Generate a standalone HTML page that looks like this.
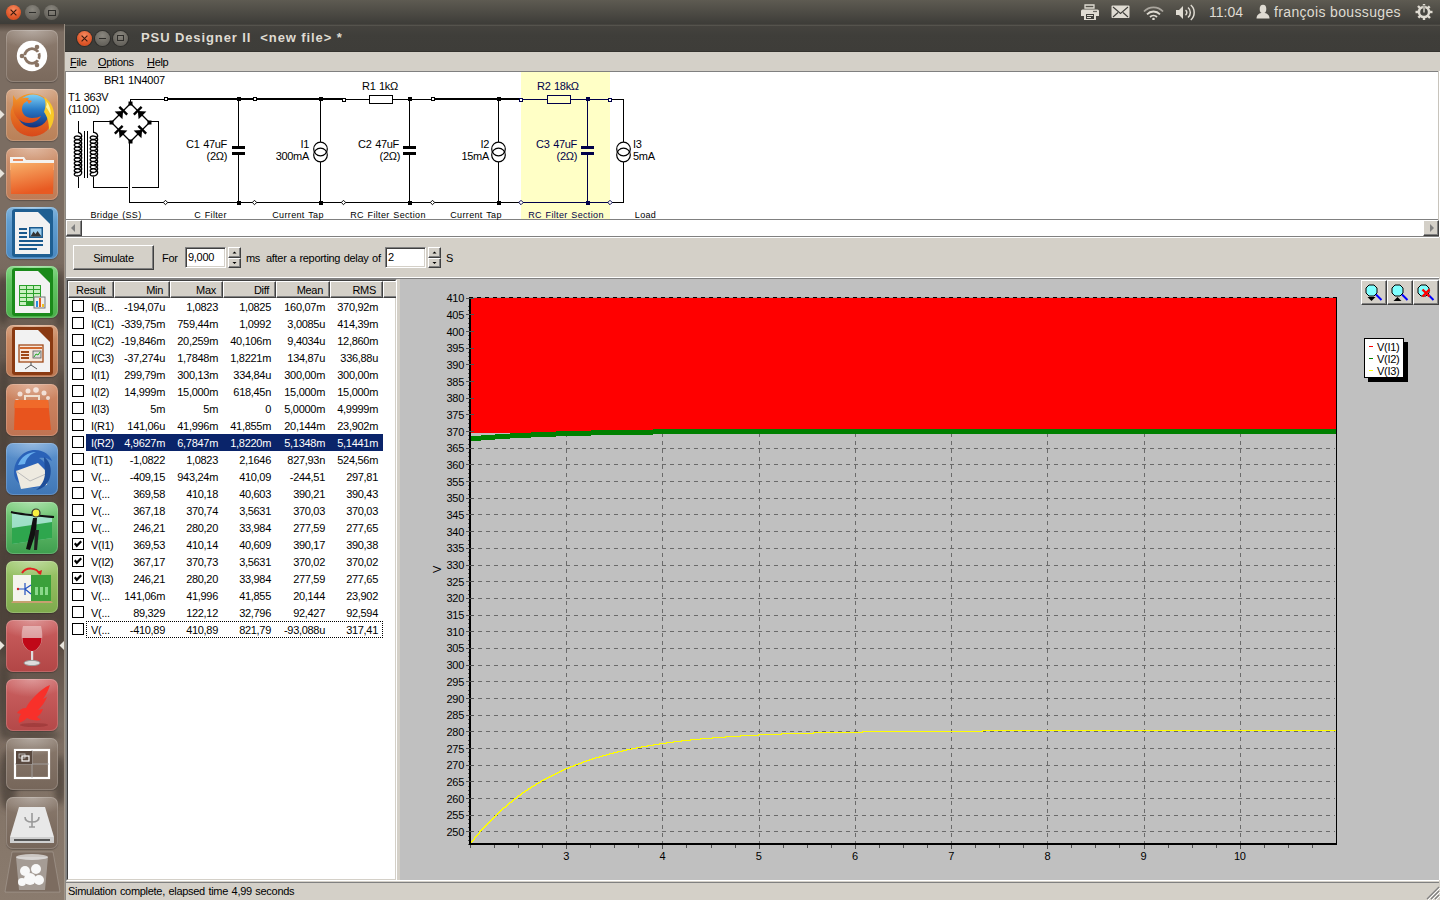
<!DOCTYPE html><html><head><meta charset="utf-8"><style>
*{margin:0;padding:0;box-sizing:border-box}
html,body{width:1440px;height:900px;overflow:hidden;background:#7a6d62;font-family:"Liberation Sans",sans-serif}
.a{position:absolute}
.t{position:absolute;white-space:pre;font-family:"Liberation Sans",sans-serif;font-size:11px;line-height:13px;color:#000;letter-spacing:-0.3px;word-spacing:0.8px}
</style></head><body>
<div class="a" style="left:0;top:0;width:1440px;height:24px;background:linear-gradient(#5e5b52,#3d3c38)"></div>
<!-- top panel buttons -->
<div class="a" style="left:6px;top:5px;width:15px;height:15px;border-radius:50%;background:radial-gradient(circle at 50% 30%,#f68a5f,#e0582a 60%,#c9441b)"></div>
<svg class="a" style="left:6px;top:5px" width="15" height="15"><path d="M4.6 4.6L10.4 10.4M10.4 4.6L4.6 10.4" stroke="#3a1a0e" stroke-width="1.1"/></svg>
<div class="a" style="left:24.5px;top:5px;width:15px;height:15px;border-radius:50%;background:radial-gradient(circle at 50% 30%,#8a877f,#6c6962 60%,#5b5953)"></div>
<div class="a" style="left:28.5px;top:12px;width:7px;height:1.2px;background:#2e2d2a"></div>
<div class="a" style="left:43.5px;top:5px;width:15px;height:15px;border-radius:50%;background:radial-gradient(circle at 50% 30%,#8a877f,#6c6962 60%,#5b5953)"></div>
<div class="a" style="left:47.5px;top:9.5px;width:8px;height:6px;border:1.2px solid #2e2d2a"></div>
<!-- indicators -->
<svg class="a" style="left:1080px;top:4px" width="20" height="17" viewBox="0 0 20 17">
 <path d="M5 1h9v3H5z" fill="none" stroke="#dfdbd2" stroke-width="1.3"/>
 <path d="M2.5 5.5h15a1.5 1.5 0 0 1 1.5 1.5v5h-3v4H4v-4H1V7a1.5 1.5 0 0 1 1.5-1.5z" fill="#dfdbd2"/>
 <path d="M6 10h8v5H6z" fill="#3f3e3a"/><path d="M7 11.5h6M7 13.5h4" stroke="#dfdbd2" stroke-width="1"/>
 <circle cx="14" cy="7.5" r="0.8" fill="#3f3e3a"/><circle cx="16" cy="7.5" r="0.8" fill="#3f3e3a"/>
</svg>
<svg class="a" style="left:1111px;top:5px" width="20" height="14" viewBox="0 0 20 14">
 <rect x="0.5" y="0.5" width="18" height="12.5" rx="1" fill="#dfdbd2"/>
 <path d="M2 2l7.5 6.5L17 2M2 12l5-4.5M17 12l-5-4.5" stroke="#3f3e3a" stroke-width="1.1" fill="none"/>
</svg>
<svg class="a" style="left:1143px;top:6px" width="21" height="14" viewBox="0 0 21 14">
 <path d="M1 5.5a13 13 0 0 1 19 0" stroke="#aaa69e" stroke-width="1.8" fill="none"/>
 <path d="M4 8.3a9 9 0 0 1 13 0" stroke="#dfdbd2" stroke-width="1.8" fill="none"/>
 <path d="M7 11a5 5 0 0 1 7 0" stroke="#dfdbd2" stroke-width="1.8" fill="none"/>
 <circle cx="10.5" cy="13" r="1.3" fill="#dfdbd2"/>
</svg>
<svg class="a" style="left:1175px;top:4px" width="21" height="17" viewBox="0 0 21 17">
 <path d="M1 6h3l4-4v13l-4-4H1z" fill="#dfdbd2"/>
 <path d="M10.5 6a3 3 0 0 1 0 5" stroke="#dfdbd2" stroke-width="1.5" fill="none"/>
 <path d="M13 3.5a6.5 6.5 0 0 1 0 10" stroke="#dfdbd2" stroke-width="1.5" fill="none"/>
 <path d="M15.8 1a10 10 0 0 1 0 15" stroke="#dfdbd2" stroke-width="1.5" fill="none"/>
</svg>
<div class="t" style="left:1209px;top:3px;font-size:14px;line-height:18px;color:#dfdbd2;letter-spacing:0;word-spacing:0">11:04</div>
<svg class="a" style="left:1256px;top:4px" width="14" height="15" viewBox="0 0 14 15">
 <ellipse cx="7" cy="5" rx="3.3" ry="4.3" fill="#dfdbd2"/>
 <path d="M0.5 14.5c0-3.5 2.5-5 4.5-5.5h4c2 0.5 4.5 2 4.5 5.5z" fill="#dfdbd2"/>
</svg>
<div class="t" style="left:1274px;top:3px;font-size:14px;line-height:18px;color:#dfdbd2;letter-spacing:0.35px;word-spacing:0">françois boussuges</div>
<svg class="a" style="left:1415px;top:3px" width="18" height="17" viewBox="0 0 18 17">
 <g fill="#dfdbd2">
 <circle cx="9" cy="9" r="6.3"/>
 <rect x="7.8" y="1" width="2.4" height="3" /><rect x="7.8" y="14" width="2.4" height="3"/>
 <rect x="0.5" y="7.8" width="3" height="2.4"/><rect x="14.5" y="7.8" width="3" height="2.4"/>
 <rect x="7.8" y="1" width="2.4" height="3" transform="rotate(45 9 9)"/><rect x="7.8" y="14" width="2.4" height="3" transform="rotate(45 9 9)"/>
 <rect x="0.5" y="7.8" width="3" height="2.4" transform="rotate(45 9 9)"/><rect x="14.5" y="7.8" width="3" height="2.4" transform="rotate(45 9 9)"/>
 </g>
 <circle cx="9" cy="9" r="3.8" fill="#45443f"/>
 <rect x="7.9" y="2.5" width="2.2" height="7" fill="#45443f"/>
 <rect x="8.3" y="3" width="1.4" height="6.5" fill="#dfdbd2"/>
</svg>

<div class="a" style="left:0;top:24px;width:65px;height:876px;background:linear-gradient(#7b6d62 0px,#7b6d62 230px,#6c5e53 300px,#5e5047 420px,#54473e 520px,#5a4c43 620px,#7a6b60 700px,#857669 800px,#8a7b6e 876px)"></div>
<div class="a" style="left:0;top:24px;width:65px;height:8px;background:linear-gradient(rgba(40,32,26,0.55),rgba(40,32,26,0))"></div>
<svg class="a" style="left:0;top:24px" width="65" height="876" viewBox="0 24 65 876">
<defs><filter id="bl" x="-50%" y="-50%" width="200%" height="200%"><feGaussianBlur stdDeviation="3"/></filter></defs>
<g filter="url(#bl)" fill="#4a3f37" opacity="0.75">
<ellipse cx="3" cy="300" rx="8" ry="25"/>
<ellipse cx="60" cy="300" rx="6" ry="30"/>
<ellipse cx="4" cy="420" rx="7" ry="60"/>
<ellipse cx="62" cy="440" rx="6" ry="70"/>
<ellipse cx="4" cy="600" rx="8" ry="60"/>
<ellipse cx="62" cy="600" rx="5" ry="50"/>
<ellipse cx="30" cy="555" rx="30" ry="6"/>
<ellipse cx="30" cy="616" rx="30" ry="5"/>
<ellipse cx="4" cy="700" rx="7" ry="40"/>
<ellipse cx="30" cy="735" rx="30" ry="5"/>
<ellipse cx="8" cy="780" rx="9" ry="30"/>
<ellipse cx="60" cy="780" rx="6" ry="25"/>
</g>
<rect x="64" y="24" width="1" height="876" fill="#a89c90" opacity="0.8"/>
</svg>
<div class="a" style="left:6px;top:30px;width:52px;height:52px;border-radius:7px;background:linear-gradient(#8e7d70,#7a695c);box-shadow:inset 0 0 0 1px rgba(255,255,255,0.18),0 1px 1px rgba(0,0,0,0.25)"></div>
<div class="a" style="left:6px;top:30px;width:52px;height:52px;border-radius:7px;background:radial-gradient(ellipse 70% 35% at 50% 0%,rgba(255,255,255,0.35),rgba(255,255,255,0) 100%)"></div>
<svg class="a" style="left:6px;top:30px" width="52" height="52" viewBox="0 0 52 52"><circle cx="26" cy="26" r="15.2" fill="#fff"/><circle cx="26" cy="26" r="7.2" fill="none" stroke="#8a7565" stroke-width="3"/><g stroke="#fff" stroke-width="1.6"><path d="M26 26L37.5 20" /><path d="M26 26L13 26"/><path d="M26 26L37.5 32.5"/></g><circle cx="26" cy="26" r="5.7" fill="#fff"/><circle cx="31" cy="17" r="2.3" fill="#8a7565"/><circle cx="16" cy="26" r="2.3" fill="#8a7565"/><circle cx="31" cy="35" r="2.3" fill="#8a7565"/></svg>
<div class="a" style="left:6px;top:89px;width:52px;height:52px;border-radius:7px;background:linear-gradient(#cf9a74,#b98058);box-shadow:inset 0 0 0 1px rgba(255,255,255,0.18),0 1px 1px rgba(0,0,0,0.25)"></div>
<div class="a" style="left:6px;top:89px;width:52px;height:52px;border-radius:7px;background:radial-gradient(ellipse 70% 35% at 50% 0%,rgba(255,255,255,0.35),rgba(255,255,255,0) 100%)"></div>
<svg class="a" style="left:6px;top:89px" width="52" height="52" viewBox="0 0 52 52"><defs><linearGradient id="fxo" x1="0" y1="0" x2="0" y2="1"><stop offset="0" stop-color="#f39a2a"/><stop offset="1" stop-color="#d8481a"/></linearGradient><linearGradient id="fxb" x1="0" y1="0" x2="0" y2="1"><stop offset="0" stop-color="#7fd0f5"/><stop offset="0.45" stop-color="#2a7cc8"/><stop offset="1" stop-color="#16307a"/></linearGradient></defs><circle cx="26" cy="26" r="21.5" fill="url(#fxo)"/><circle cx="27" cy="22" r="16.5" fill="url(#fxb)"/><path d="M7 6l4 6c3-3 8-4 12-3l-3 4c-3 1-4 4-4 7c0 5 4 9 10 9c4 0 7-1 9-2c-2 4-7 7-12 7c-9 0-16-7-16-16c0-4 0-9 0-12z" fill="url(#fxo)"/><path d="M20 10l6 2l-3 3z" fill="#f07a30"/><path d="M38 8c6 4 10 10 10 18c0 6-2 11-5 15c0-8-2-14-5-18c2-5 2-10 0-15z" fill="#f8c828"/><path d="M40 12c3 3 5 8 5 14c-2-3-3-6-5-8c1-2 1-4 0-6z" fill="#fff4a0"/></svg>
<div class="a" style="left:6px;top:148px;width:52px;height:52px;border-radius:7px;background:linear-gradient(#d09470,#bf7b55);box-shadow:inset 0 0 0 1px rgba(255,255,255,0.18),0 1px 1px rgba(0,0,0,0.25)"></div>
<div class="a" style="left:6px;top:148px;width:52px;height:52px;border-radius:7px;background:radial-gradient(ellipse 70% 35% at 50% 0%,rgba(255,255,255,0.35),rgba(255,255,255,0) 100%)"></div>
<svg class="a" style="left:6px;top:148px" width="52" height="52" viewBox="0 0 52 52"><path d="M4 9h14l2 3h28v10H4z" fill="#f4f2ef"/><rect x="7" y="11" width="10" height="2" fill="#e98a5a"/><path d="M4 15h44l-1 31H5z" fill="url(#fo)"/><defs><linearGradient id="fo" x1="0" y1="0" x2="0.3" y2="1"><stop offset="0" stop-color="#f8b06a"/><stop offset="1" stop-color="#e85a22"/></linearGradient></defs></svg>
<div class="a" style="left:6px;top:207px;width:52px;height:52px;border-radius:7px;background:linear-gradient(#6aa6d6,#4a88c0);box-shadow:inset 0 0 0 1px rgba(255,255,255,0.18),0 1px 1px rgba(0,0,0,0.25)"></div>
<div class="a" style="left:6px;top:207px;width:52px;height:52px;border-radius:7px;background:radial-gradient(ellipse 70% 35% at 50% 0%,rgba(255,255,255,0.35),rgba(255,255,255,0) 100%)"></div>
<svg class="a" style="left:6px;top:207px" width="52" height="52" viewBox="0 0 52 52"><rect x="6" y="2" width="41" height="48" rx="3" fill="#1f5f92"/><path d="M9 5h23l12 12v30H9z" fill="#f2f2f2"/><path d="M36 3h8a3 3 0 0 1 3 3v8z" fill="#1f5f92" opacity="0.6"/><g fill="#1a5a8e"><rect x="13" y="21" width="8" height="2"/><rect x="13" y="25" width="8" height="2"/><rect x="13" y="29" width="8" height="2"/><rect x="13" y="33" width="24" height="2"/><rect x="13" y="37" width="24" height="2"/><rect x="13" y="41" width="18" height="2"/></g><rect x="23" y="20" width="14" height="11" fill="#1a5a8e"/><rect x="24.5" y="21.5" width="11" height="8" fill="#9fd0f0"/><path d="M24.5 29.5l3-5l2 2.5l2-3l4 5.5z" fill="#333"/></svg>
<div class="a" style="left:6px;top:266px;width:52px;height:52px;border-radius:7px;background:linear-gradient(#6fd06f,#4aae4a);box-shadow:inset 0 0 0 1px rgba(255,255,255,0.18),0 1px 1px rgba(0,0,0,0.25)"></div>
<div class="a" style="left:6px;top:266px;width:52px;height:52px;border-radius:7px;background:radial-gradient(ellipse 70% 35% at 50% 0%,rgba(255,255,255,0.35),rgba(255,255,255,0) 100%)"></div>
<svg class="a" style="left:6px;top:266px" width="52" height="52" viewBox="0 0 52 52"><rect x="6" y="2" width="41" height="48" rx="3" fill="#1a8a1a"/><path d="M9 5h23l12 12v30H9z" fill="#f2f2f2"/><path d="M36 3h8a3 3 0 0 1 3 3v8z" fill="#1a8a1a" opacity="0.6"/><g fill="#2aa02a"><rect x="13" y="19" width="22" height="21"/></g><g fill="#c8f0c0"><rect x="14" y="20" width="6" height="3"/><rect x="21" y="20" width="6" height="3"/><rect x="28" y="20" width="6" height="3"/><rect x="14" y="24" width="6" height="3"/><rect x="21" y="24" width="6" height="3"/><rect x="28" y="24" width="6" height="3"/><rect x="14" y="28" width="6" height="3"/><rect x="21" y="28" width="6" height="3"/><rect x="28" y="28" width="6" height="3"/><rect x="14" y="32" width="6" height="3"/><rect x="21" y="32" width="6" height="3"/><rect x="14" y="36" width="6" height="3"/></g><rect x="28" y="31" width="11" height="11" fill="#eee" stroke="#777"/><rect x="30" y="35" width="2" height="6" fill="#2a8ae0"/><rect x="33" y="32" width="2" height="9" fill="#e06020"/><rect x="36" y="38" width="2" height="3" fill="#f0c020"/></svg>
<div class="a" style="left:6px;top:325px;width:52px;height:52px;border-radius:7px;background:linear-gradient(#d0926a,#bb7650);box-shadow:inset 0 0 0 1px rgba(255,255,255,0.18),0 1px 1px rgba(0,0,0,0.25)"></div>
<div class="a" style="left:6px;top:325px;width:52px;height:52px;border-radius:7px;background:radial-gradient(ellipse 70% 35% at 50% 0%,rgba(255,255,255,0.35),rgba(255,255,255,0) 100%)"></div>
<svg class="a" style="left:6px;top:325px" width="52" height="52" viewBox="0 0 52 52"><rect x="6" y="2" width="41" height="48" rx="3" fill="#8a3a12"/><path d="M9 5h23l12 12v30H9z" fill="#f2f2f2"/><path d="M36 3h8a3 3 0 0 1 3 3v8z" fill="#8a3a12" opacity="0.6"/><rect x="13" y="20" width="24" height="17" fill="#f8e8dc" stroke="#a04a1a" stroke-width="1.3"/><rect x="14" y="22" width="22" height="2" fill="#d06a30"/><g fill="#a04a1a"><rect x="15" y="26" width="8" height="2"/><rect x="15" y="29" width="8" height="2"/><rect x="15" y="32" width="8" height="2"/></g><rect x="27" y="26" width="8" height="7" fill="#ddd" stroke="#555" stroke-width="0.8"/><path d="M28 32l2-3l2 1l2-3" stroke="#2a2" fill="none"/><path d="M25 37v3M25 40l-6 4M25 40l6 4" stroke="#555" stroke-width="1"/></svg>
<div class="a" style="left:6px;top:384px;width:52px;height:52px;border-radius:7px;background:linear-gradient(#d08a66,#bf7352);box-shadow:inset 0 0 0 1px rgba(255,255,255,0.18),0 1px 1px rgba(0,0,0,0.25)"></div>
<div class="a" style="left:6px;top:384px;width:52px;height:52px;border-radius:7px;background:radial-gradient(ellipse 70% 35% at 50% 0%,rgba(255,255,255,0.35),rgba(255,255,255,0) 100%)"></div>
<svg class="a" style="left:6px;top:384px" width="52" height="52" viewBox="0 0 52 52"><g fill="#fff" opacity="0.7"><circle cx="14" cy="10" r="2.5"/><circle cx="22" cy="7" r="2.5"/><circle cx="30" cy="6" r="2.8"/><circle cx="38" cy="9" r="2.5"/><circle cx="42" cy="14" r="2"/><circle cx="11" cy="17" r="2"/></g><path d="M19 16v-4h14v4" fill="none" stroke="#f0e0d0" stroke-width="2"/><path d="M9 16h33l3 30H8z" fill="#e8541e"/><path d="M9 16h33l1 8H8z" fill="#f06a2a"/></svg>
<div class="a" style="left:6px;top:443px;width:52px;height:52px;border-radius:7px;background:linear-gradient(#5f95d0,#3f76b6);box-shadow:inset 0 0 0 1px rgba(255,255,255,0.18),0 1px 1px rgba(0,0,0,0.25)"></div>
<div class="a" style="left:6px;top:443px;width:52px;height:52px;border-radius:7px;background:radial-gradient(ellipse 70% 35% at 50% 0%,rgba(255,255,255,0.35),rgba(255,255,255,0) 100%)"></div>
<svg class="a" style="left:6px;top:443px" width="52" height="52" viewBox="0 0 52 52"><path d="M8 30c0-13 9-23 21-23c9 0 15 5 17 11c-4-3-9-4-13-3c5 3 9 8 9 14c0 9-7 16-16 16c-10 0-18-7-18-15z" fill="#2a62b8"/><path d="M12 22c3-8 10-13 18-13c-6 2-10 7-11 12z" fill="#6ab0ee"/><path d="M10 28l22-8l10 10l-1 12l-26 4z" fill="#eeeae0"/><path d="M10 28l14 10l18-8" fill="none" stroke="#bbb" stroke-width="1"/><path d="M38 14c6 4 8 12 6 20c-2 8-8 12-14 13c5-4 9-10 9-17c0-6-1-11-1-16z" fill="#1e4e9a"/></svg>
<div class="a" style="left:6px;top:502px;width:52px;height:52px;border-radius:7px;background:linear-gradient(#7ed07e,#3e9e4e);box-shadow:inset 0 0 0 1px rgba(255,255,255,0.18),0 1px 1px rgba(0,0,0,0.25)"></div>
<div class="a" style="left:6px;top:502px;width:52px;height:52px;border-radius:7px;background:radial-gradient(ellipse 70% 35% at 50% 0%,rgba(255,255,255,0.35),rgba(255,255,255,0) 100%)"></div>
<svg class="a" style="left:6px;top:502px" width="52" height="52" viewBox="0 0 52 52"><path d="M6 10l40 4v22L6 42z" fill="#b8f0f0" opacity="0.7"/><path d="M6 26l40-6v16L6 42z" fill="#22a040" opacity="0.9"/><path d="M5 10c12 3 30 4 43 5" stroke="#111" stroke-width="2.2" fill="none"/><circle cx="30" cy="11" r="4" fill="#f8f040" stroke="#333" stroke-width="1.2"/><path d="M27 16l4 0l-1 14l-6 18l-4-1l4-16z" fill="#111"/><path d="M29 28l-1 20l3 0l2-20z" fill="#222"/></svg>
<div class="a" style="left:6px;top:561px;width:52px;height:52px;border-radius:7px;background:linear-gradient(#9ec86c,#7eaa4c);box-shadow:inset 0 0 0 1px rgba(255,255,255,0.18),0 1px 1px rgba(0,0,0,0.25)"></div>
<div class="a" style="left:6px;top:561px;width:52px;height:52px;border-radius:7px;background:radial-gradient(ellipse 70% 35% at 50% 0%,rgba(255,255,255,0.35),rgba(255,255,255,0) 100%)"></div>
<svg class="a" style="left:6px;top:561px" width="52" height="52" viewBox="0 0 52 52"><path d="M7 14h38v26H7z" fill="#f4f4ec"/><path d="M25 14h20v26H25z" fill="#3aa03a"/><path d="M7 40h38l2 2H5z" fill="#c8a070"/><g fill="#8ad88a"><rect x="29" y="26" width="3" height="8"/><rect x="34" y="26" width="3" height="8"/><rect x="39" y="26" width="3" height="8"/></g><path d="M13 28h6M19 22v12M19 28l6-4M19 28l6 5" stroke="#2050c0" stroke-width="1.2"/><circle cx="12" cy="28" r="1.2" fill="#d02020"/><path d="M16 12c4-6 14-6 18 1" stroke="#e02020" stroke-width="2" fill="none"/><path d="M31 11l4 3l1-5z" fill="#e02020"/></svg>
<div class="a" style="left:6px;top:620px;width:52px;height:52px;border-radius:7px;background:linear-gradient(#cc6060,#b24646);box-shadow:inset 0 0 0 1px rgba(255,255,255,0.18),0 1px 1px rgba(0,0,0,0.25)"></div>
<div class="a" style="left:6px;top:620px;width:52px;height:52px;border-radius:7px;background:radial-gradient(ellipse 70% 35% at 50% 0%,rgba(255,255,255,0.35),rgba(255,255,255,0) 100%)"></div>
<svg class="a" style="left:6px;top:620px" width="52" height="52" viewBox="0 0 52 52"><path d="M17 6h18c2 8 2 16-2 21c-2 3-5 4-7 4c-2 0-5-1-7-4c-4-5-4-13-2-21z" fill="#f0d8d8" opacity="0.55"/><path d="M16.5 18h19c0 4-1 7-3 9c-2 3-5 4-6.5 4c-1.5 0-4.5-1-6.5-4c-2-2-3-5-3-9z" fill="#c00818"/><rect x="25" y="31" width="2.2" height="10" fill="#ddd"/><ellipse cx="26" cy="43" rx="8" ry="2.6" fill="#ddd" stroke="#999"/></svg>
<div class="a" style="left:6px;top:679px;width:52px;height:52px;border-radius:7px;background:linear-gradient(#cc6262,#b44848);box-shadow:inset 0 0 0 1px rgba(255,255,255,0.18),0 1px 1px rgba(0,0,0,0.25)"></div>
<div class="a" style="left:6px;top:679px;width:52px;height:52px;border-radius:7px;background:radial-gradient(ellipse 70% 35% at 50% 0%,rgba(255,255,255,0.35),rgba(255,255,255,0) 100%)"></div>
<svg class="a" style="left:6px;top:679px" width="52" height="52" viewBox="0 0 52 52"><path d="M44 6c-5 2-10 6-14 10c-4 4-8 8-10 13c-4 0-7 2-9 5l4 1c-2 3-3 6-2 9c3-1 6-3 8-5c4 2 9 3 14 2l-4-3c3-2 5-5 6-8l-5 1c4-4 7-8 9-13l-4 2c3-4 5-8 7-14z" fill="#f8302a"/><ellipse cx="28" cy="46" rx="14" ry="2" fill="#903030" opacity="0.5"/></svg>
<div class="a" style="left:6px;top:738px;width:52px;height:52px;border-radius:7px;background:linear-gradient(#8a7a6d,#76665a);box-shadow:inset 0 0 0 1px rgba(255,255,255,0.18),0 1px 1px rgba(0,0,0,0.25)"></div>
<div class="a" style="left:6px;top:738px;width:52px;height:52px;border-radius:7px;background:radial-gradient(ellipse 70% 35% at 50% 0%,rgba(255,255,255,0.35),rgba(255,255,255,0) 100%)"></div>
<svg class="a" style="left:6px;top:738px" width="52" height="52" viewBox="0 0 52 52"><rect x="9" y="12" width="34" height="28" fill="none" stroke="#fff" stroke-width="2.2"/><path d="M26 12v28M9 26h34" stroke="#aaa" stroke-width="0.8"/><rect x="10" y="13" width="16" height="13" fill="#5a4a40"/><rect x="13" y="16" width="6" height="4" fill="none" stroke="#ccc" stroke-width="0.8"/><rect x="16" y="18" width="7" height="5" fill="none" stroke="#fff" stroke-width="1.2"/></svg>
<div class="a" style="left:6px;top:797px;width:52px;height:52px;border-radius:7px;background:linear-gradient(#8a7a6d,#76665a);box-shadow:inset 0 0 0 1px rgba(255,255,255,0.18),0 1px 1px rgba(0,0,0,0.25)"></div>
<div class="a" style="left:6px;top:797px;width:52px;height:52px;border-radius:7px;background:radial-gradient(ellipse 70% 35% at 50% 0%,rgba(255,255,255,0.35),rgba(255,255,255,0) 100%)"></div>
<svg class="a" style="left:6px;top:797px" width="52" height="52" viewBox="0 0 52 52"><path d="M13 10h26l9 30H4z" fill="#e8e8e8"/><rect x="4" y="40" width="44" height="6" fill="#cfcfcf"/><rect x="8" y="42" width="36" height="2" fill="#555"/><path d="M26 16v14M19 20c0 4 3 5 7 5s7-1 7-5M23 30h6" stroke="#999" stroke-width="1.6" fill="none"/></svg>
<svg class="a" style="left:4px;top:851px" width="57" height="42" viewBox="0 0 57 42"><path d="M8 1h41l7 40H1z" fill="#7c6c60" stroke="rgba(255,255,255,0.18)"/></svg>
<svg class="a" style="left:6px;top:851px" width="52" height="42" viewBox="0 0 52 42"><path d="M10 6h32l-3 33H13z" fill="#d8d8d8" opacity="0.45"/><ellipse cx="26" cy="6" rx="16" ry="3" fill="#eee" opacity="0.7"/><g fill="#f8f8f8"><circle cx="19" cy="20" r="5"/><circle cx="30" cy="18" r="5"/><circle cx="24" cy="28" r="6"/><circle cx="33" cy="29" r="5"/><circle cx="16" cy="31" r="4"/></g></svg>
<svg class="a" style="left:0;top:110px" width="5" height="9"><path d="M0 0L4.5 4.5L0 9z" fill="#e8e4dc"/></svg>
<svg class="a" style="left:0;top:169px" width="5" height="9"><path d="M0 0L4.5 4.5L0 9z" fill="#e8e4dc"/></svg>
<svg class="a" style="left:0;top:641px" width="5" height="9"><path d="M0 0L4.5 4.5L0 9z" fill="#e8e4dc"/></svg>
<svg class="a" style="left:59px;top:641px" width="5" height="9"><path d="M5 0L0.5 4.5L5 9z" fill="#e8e4dc"/></svg>
<!-- title bar -->
<div class="a" style="left:65px;top:24px;width:1375px;height:28px;background:linear-gradient(#46443f,#3f3e3a 40%,#3e3d39)"></div><div class="a" style="left:65px;top:51px;width:1375px;height:1px;background:#33322e"></div><div class="a" style="left:65px;top:25px;width:1375px;height:1px;background:#55534d"></div>
<div class="a" style="left:77px;top:31px;width:15px;height:15px;border-radius:50%;background:radial-gradient(circle at 50% 30%,#f68a5f,#e0582a 60%,#c9441b);box-shadow:0 0 0 1px rgba(0,0,0,0.25)"></div>
<svg class="a" style="left:77px;top:31px" width="15" height="15"><path d="M4.6 4.6L10.4 10.4M10.4 4.6L4.6 10.4" stroke="#3a1a0e" stroke-width="1.1"/></svg>
<div class="a" style="left:95px;top:31px;width:15px;height:15px;border-radius:50%;background:radial-gradient(circle at 50% 30%,#8a877f,#6c6962 60%,#5b5953);box-shadow:0 0 0 1px rgba(0,0,0,0.25)"></div>
<div class="a" style="left:99px;top:38px;width:7px;height:1.2px;background:#2e2d2a"></div>
<div class="a" style="left:113px;top:31px;width:15px;height:15px;border-radius:50%;background:radial-gradient(circle at 50% 30%,#8a877f,#6c6962 60%,#5b5953);box-shadow:0 0 0 1px rgba(0,0,0,0.25)"></div>
<div class="a" style="left:117px;top:35px;width:7px;height:6px;border:1.2px solid #2e2d2a"></div>
<div class="t" style="left:141px;top:29px;font-size:13px;line-height:17px;font-weight:bold;color:#dfdbd2;letter-spacing:0.9px;word-spacing:0">PSU Designer II  &lt;new file&gt; *</div>
<!-- menu bar -->
<div class="a" style="left:65px;top:52px;width:1375px;height:19px;background:#d4d0c8"></div>
<div class="t" style="left:70px;top:56px;color:#000"><u>F</u>ile</div>
<div class="t" style="left:98px;top:56px;color:#000"><u>O</u>ptions</div>
<div class="t" style="left:147px;top:56px;color:#000"><u>H</u>elp</div>
<!-- window left border -->
<div class="a" style="left:65px;top:71px;width:1px;height:829px;background:#8c8984"></div>
<div class="a" style="left:66px;top:71px;width:1374px;height:829px;background:#d4d0c8"></div>
<!-- circuit panel frame -->
<div class="a" style="left:66px;top:71px;width:1373px;height:1px;background:#808080"></div>
<div class="a" style="left:66px;top:72px;width:1372px;height:147px;background:#fff"></div>
<div class="a" style="left:1438px;top:71px;width:1px;height:166px;background:#c8c4bc"></div>
<div class="a" style="left:1439px;top:71px;width:1px;height:166px;background:#fff"></div>
<div class="a" style="left:66px;top:219px;width:1372px;height:1px;background:#808080"></div>
<!-- scrollbar -->
<div class="a" style="left:66px;top:220px;width:1372px;height:16px;background:#fff"></div>
<div class="a" style="left:66px;top:220px;width:16px;height:16px;background:#d4d0c8;border-top:1px solid #fff;border-left:1px solid #fff;border-right:1px solid #404040;border-bottom:1px solid #404040;box-shadow:inset -1px -1px 0 #808080"></div>
<svg class="a" style="left:66px;top:220px" width="16" height="16"><path d="M5 8L9 4V12Z" fill="#808080"/></svg>
<div class="a" style="left:1423px;top:220px;width:16px;height:16px;background:#d4d0c8;border-top:1px solid #fff;border-left:1px solid #fff;border-right:1px solid #404040;border-bottom:1px solid #404040;box-shadow:inset -1px -1px 0 #808080"></div>
<svg class="a" style="left:1423px;top:220px" width="16" height="16"><path d="M7 4L11 8L7 12Z" fill="#808080"/></svg>
<div class="a" style="left:66px;top:236px;width:1373px;height:1px;background:#808080"></div>
<div class="a" style="left:66px;top:237px;width:1373px;height:1px;background:#fff"></div>
<!-- controls panel bottom edge -->
<div class="a" style="left:66px;top:277px;width:1373px;height:1px;background:#fff"></div>
<!-- status bar -->
<div class="a" style="left:66px;top:880px;width:1373px;height:1px;background:#fff"></div>
<div class="a" style="left:66px;top:882px;width:1373px;height:1px;background:#808080"></div>
<div class="t" style="left:68px;top:885px">Simulation complete, elapsed time 4,99 seconds</div>
<svg class="a" style="left:1426px;top:886px" width="14" height="14"><path d="M13 1L1 13M13 5L5 13M13 9L9 13" stroke="#808080" stroke-width="1.2"/><path d="M14 2L2 14M14 6L6 14M14 10L10 14" stroke="#fff" stroke-width="1"/></svg>

<svg class="a" style="left:66px;top:72px" width="1372" height="147" viewBox="66 72 1372 147" shape-rendering="crispEdges">
<rect x="521" y="72" width="89" height="147" fill="#ffffc6"/>
<rect x="130" y="99" width="36" height="1" fill="#000"/>
<rect x="130" y="99" width="1" height="4" fill="#000"/>
<rect x="166" y="98" width="177" height="2" fill="#000"/>
<rect x="343" y="99" width="26" height="1" fill="#000"/>
<rect x="393" y="99" width="39" height="1" fill="#000"/>
<rect x="432" y="98" width="89" height="2" fill="#000"/>
<rect x="521" y="99" width="26" height="1" fill="#00004a"/>
<rect x="571" y="99" width="39" height="1" fill="#00004a"/>
<rect x="610" y="99" width="14" height="1" fill="#000"/>
<rect x="623" y="99" width="1" height="43" fill="#000"/>
<rect x="129" y="141" width="1" height="61" fill="#000"/>
<rect x="129" y="202" width="392" height="1" fill="#000"/>
<rect x="521" y="202" width="89" height="1" fill="#00004a"/>
<rect x="610" y="202" width="14" height="1" fill="#000"/>
<rect x="623" y="162" width="1" height="41" fill="#000"/>
<rect x="164.0" y="97.5" width="3" height="3" fill="#fff" stroke="#000" stroke-width="1"/>
<path d="M165.5 200.3L167.7 202.5L165.5 204.7L163.3 202.5Z" fill="#fff" stroke="#000" stroke-width="1" shape-rendering="auto"/>
<rect x="253.0" y="97.5" width="3" height="3" fill="#fff" stroke="#000" stroke-width="1"/>
<path d="M254.5 200.3L256.7 202.5L254.5 204.7L252.3 202.5Z" fill="#fff" stroke="#000" stroke-width="1" shape-rendering="auto"/>
<rect x="342.0" y="98.0" width="3" height="3" fill="#fff" stroke="#000" stroke-width="1"/>
<path d="M343.5 200.3L345.7 202.5L343.5 204.7L341.3 202.5Z" fill="#fff" stroke="#000" stroke-width="1" shape-rendering="auto"/>
<rect x="431.0" y="97.5" width="3" height="3" fill="#fff" stroke="#000" stroke-width="1"/>
<path d="M432.5 200.3L434.7 202.5L432.5 204.7L430.3 202.5Z" fill="#fff" stroke="#000" stroke-width="1" shape-rendering="auto"/>
<rect x="519.5" y="98.0" width="3" height="3" fill="#fff" stroke="#00004a" stroke-width="1"/>
<path d="M521 200.3L523.2 202.5L521 204.7L518.8 202.5Z" fill="#fff" stroke="#00004a" stroke-width="1" shape-rendering="auto"/>
<rect x="608.5" y="98.0" width="3" height="3" fill="#fff" stroke="#00004a" stroke-width="1"/>
<path d="M610 200.3L612.2 202.5L610 204.7L607.8 202.5Z" fill="#fff" stroke="#00004a" stroke-width="1" shape-rendering="auto"/>
<rect x="238" y="99" width="1" height="47" fill="#000"/>
<rect x="238" y="155" width="1" height="47" fill="#000"/>
<rect x="232" y="146" width="13" height="3" fill="#000"/>
<rect x="232" y="152" width="13" height="3" fill="#000"/>
<rect x="236.5" y="97" width="4" height="4" fill="#000"/>
<rect x="236.5" y="200.5" width="4" height="4" fill="#000"/>
<rect x="409" y="99" width="1" height="47" fill="#000"/>
<rect x="409" y="155" width="1" height="47" fill="#000"/>
<rect x="403" y="146" width="13" height="3" fill="#000"/>
<rect x="403" y="152" width="13" height="3" fill="#000"/>
<rect x="407.5" y="97" width="4" height="4" fill="#000"/>
<rect x="407.5" y="200.5" width="4" height="4" fill="#000"/>
<rect x="587" y="99" width="1" height="47" fill="#00004a"/>
<rect x="587" y="155" width="1" height="47" fill="#00004a"/>
<rect x="581" y="146" width="13" height="3" fill="#00004a"/>
<rect x="581" y="152" width="13" height="3" fill="#00004a"/>
<rect x="585.5" y="97" width="4" height="4" fill="#00004a"/>
<rect x="585.5" y="200.5" width="4" height="4" fill="#00004a"/>
<rect x="320" y="99" width="1" height="43" fill="#000"/>
<rect x="320" y="162" width="1" height="40" fill="#000"/>
<circle cx="320.5" cy="149" r="6.8" fill="none" stroke="#000" stroke-width="1.2" shape-rendering="auto"/>
<circle cx="320.5" cy="155" r="6.8" fill="none" stroke="#000" stroke-width="1.2" shape-rendering="auto"/>
<rect x="318.5" y="97" width="4" height="4" fill="#000"/>
<rect x="318.5" y="200.5" width="4" height="4" fill="#000"/>
<rect x="498" y="99" width="1" height="43" fill="#000"/>
<rect x="498" y="162" width="1" height="40" fill="#000"/>
<circle cx="498.5" cy="149" r="6.8" fill="none" stroke="#000" stroke-width="1.2" shape-rendering="auto"/>
<circle cx="498.5" cy="155" r="6.8" fill="none" stroke="#000" stroke-width="1.2" shape-rendering="auto"/>
<rect x="496.5" y="97" width="4" height="4" fill="#000"/>
<rect x="496.5" y="200.5" width="4" height="4" fill="#000"/>
<rect x="623" y="99" width="1" height="43" fill="#000"/>
<rect x="623" y="162" width="1" height="40" fill="#000"/>
<circle cx="623.5" cy="149" r="6.8" fill="none" stroke="#000" stroke-width="1.2" shape-rendering="auto"/>
<circle cx="623.5" cy="155" r="6.8" fill="none" stroke="#000" stroke-width="1.2" shape-rendering="auto"/>
<rect x="369.5" y="95.5" width="23" height="8" fill="#fff" stroke="#000"/>
<rect x="547.5" y="95.5" width="23" height="8" fill="#ffffc6" stroke="#00004a"/>
<g shape-rendering="auto">
<line x1="111.5" y1="122.5" x2="130.5" y2="103.5" stroke="#000" stroke-width="1.3"/>
<line x1="130.5" y1="103.5" x2="149.5" y2="122.5" stroke="#000" stroke-width="1.3"/>
<line x1="111.5" y1="122.5" x2="130.5" y2="141.5" stroke="#000" stroke-width="1.3"/>
<line x1="130.5" y1="141.5" x2="149.5" y2="122.5" stroke="#000" stroke-width="1.3"/>
<g transform="translate(121.0,113.0) rotate(-45.0)"><path d="M-3.5,-5.5 L3,0 L-3.5,5.5Z" fill="#000"/><rect x="2" y="-5.5" width="2.4" height="11" fill="#000"/></g>
<g transform="translate(140.0,113.0) rotate(-135.0)"><path d="M-3.5,-5.5 L3,0 L-3.5,5.5Z" fill="#000"/><rect x="2" y="-5.5" width="2.4" height="11" fill="#000"/></g>
<g transform="translate(121.0,132.0) rotate(-135.0)"><path d="M-3.5,-5.5 L3,0 L-3.5,5.5Z" fill="#000"/><rect x="2" y="-5.5" width="2.4" height="11" fill="#000"/></g>
<g transform="translate(140.0,132.0) rotate(-45.0)"><path d="M-3.5,-5.5 L3,0 L-3.5,5.5Z" fill="#000"/><rect x="2" y="-5.5" width="2.4" height="11" fill="#000"/></g>
<rect x="128.5" y="101.5" width="4" height="4" fill="#000"/>
<rect x="109.5" y="120.5" width="4" height="4" fill="#000"/>
<rect x="147.5" y="120.5" width="4" height="4" fill="#000"/>
<rect x="128.5" y="139.5" width="4" height="4" fill="#000"/>
</g>
<rect x="93" y="121" width="18" height="1" fill="#000"/>
<rect x="93" y="121" width="1" height="12" fill="#000"/>
<rect x="149" y="121" width="10" height="1" fill="#000"/>
<rect x="158" y="121" width="1" height="67" fill="#000"/>
<rect x="93" y="187" width="35" height="1" fill="#000"/>
<rect x="132" y="187" width="27" height="1" fill="#000"/>
<rect x="93" y="177" width="1" height="11" fill="#000"/>
<rect x="78" y="121" width="1" height="12" fill="#000"/>
<rect x="78" y="177" width="1" height="11" fill="#000"/>
<rect x="84" y="131" width="1" height="47" fill="#000"/>
<rect x="87" y="131" width="1" height="47" fill="#000"/>
<g shape-rendering="auto" fill="none" stroke="#000" stroke-width="1.35">
<polyline points="78.00,132.40 78.96,132.64 79.85,133.05 80.62,133.62 81.20,134.31 81.57,135.09 81.70,135.91 81.57,136.74 81.20,137.52 80.62,138.21 79.85,138.77 78.96,139.19 78.00,139.43 77.04,139.49 76.15,139.38 75.38,139.12 74.80,138.74 74.43,138.26 74.30,137.74 74.43,137.22 74.80,136.75 75.38,136.36 76.15,136.10 77.04,135.99 78.00,136.05 78.96,136.30 79.85,136.71 80.62,137.27 81.20,137.96 81.57,138.74 81.70,139.57 81.57,140.39 81.20,141.17 80.62,141.86 79.85,142.43 78.96,142.84 78.00,143.08 77.04,143.15 76.15,143.04 75.38,142.78 74.80,142.39 74.43,141.92 74.30,141.40 74.43,140.87 74.80,140.40 75.38,140.01 76.15,139.75 77.04,139.65 78.00,139.71 78.96,139.95 79.85,140.36 80.62,140.93 81.20,141.62 81.57,142.40 81.70,143.22 81.57,144.05 81.20,144.83 80.62,145.52 79.85,146.08 78.96,146.50 78.00,146.74 77.04,146.80 76.15,146.69 75.38,146.43 74.80,146.05 74.43,145.57 74.30,145.05 74.43,144.53 74.80,144.05 75.38,143.67 76.15,143.41 77.04,143.30 78.00,143.36 78.96,143.60 79.85,144.02 80.62,144.58 81.20,145.27 81.57,146.05 81.70,146.88 81.57,147.70 81.20,148.48 80.62,149.17 79.85,149.74 78.96,150.15 78.00,150.39 77.04,150.45 76.15,150.35 75.38,150.09 74.80,149.70 74.43,149.23 74.30,148.70 74.43,148.18 74.80,147.71 75.38,147.32 76.15,147.06 77.04,146.95 78.00,147.02 78.96,147.26 79.85,147.67 80.62,148.24 81.20,148.93 81.57,149.71 81.70,150.53 81.57,151.36 81.20,152.14 80.62,152.83 79.85,153.39 78.96,153.80 78.00,154.05 77.04,154.11 76.15,154.00 75.38,153.74 74.80,153.35 74.43,152.88 74.30,152.36 74.43,151.84 74.80,151.36 75.38,150.98 76.15,150.72 77.04,150.61 78.00,150.67 78.96,150.91 79.85,151.33 80.62,151.89 81.20,152.58 81.57,153.36 81.70,154.19 81.57,155.01 81.20,155.79 80.62,156.48 79.85,157.05 78.96,157.46 78.00,157.70 77.04,157.76 76.15,157.66 75.38,157.40 74.80,157.01 74.43,156.53 74.30,156.01 74.43,155.49 74.80,155.02 75.38,154.63 76.15,154.37 77.04,154.26 78.00,154.33 78.96,154.57 79.85,154.98 80.62,155.55 81.20,156.24 81.57,157.02 81.70,157.84 81.57,158.67 81.20,159.45 80.62,160.14 79.85,160.70 78.96,161.11 78.00,161.35 77.04,161.42 76.15,161.31 75.38,161.05 74.80,160.66 74.43,160.19 74.30,159.67 74.43,159.15 74.80,158.67 75.38,158.29 76.15,158.03 77.04,157.92 78.00,157.98 78.96,158.22 79.85,158.63 80.62,159.20 81.20,159.89 81.57,160.67 81.70,161.50 81.57,162.32 81.20,163.10 80.62,163.79 79.85,164.36 78.96,164.77 78.00,165.01 77.04,165.07 76.15,164.97 75.38,164.70 74.80,164.32 74.43,163.84 74.30,163.32 74.43,162.80 74.80,162.33 75.38,161.94 76.15,161.68 77.04,161.57 78.00,161.64 78.96,161.88 79.85,162.29 80.62,162.85 81.20,163.55 81.57,164.32 81.70,165.15 81.57,165.98 81.20,166.75 80.62,167.45 79.85,168.01 78.96,168.42 78.00,168.66 77.04,168.73 76.15,168.62 75.38,168.36 74.80,167.97 74.43,167.50 74.30,166.98 74.43,166.46 74.80,165.98 75.38,165.60 76.15,165.33 77.04,165.23 78.00,165.29 78.96,165.53 79.85,165.94 80.62,166.51 81.20,167.20 81.57,167.98 81.70,168.80 81.57,169.63 81.20,170.41 80.62,171.10 79.85,171.67 78.96,172.08 78.00,172.32 77.04,172.38 76.15,172.27 75.38,172.01 74.80,171.63 74.43,171.15 74.30,170.63 74.43,170.11 74.80,169.64 75.38,169.25 76.15,168.99 77.04,168.88 78.00,168.95 78.96,169.19 79.85,169.60 80.62,170.16 81.20,170.85 81.57,171.63 81.70,172.46 81.57,173.28 81.20,174.06 80.62,174.75 79.85,175.32 78.96,175.73 78.00,175.97 77.04,176.04 76.15,175.93 75.38,175.67 74.80,175.28 74.43,174.81 74.30,174.29 74.43,173.77 74.80,173.29 75.38,172.90 76.15,172.64 77.04,172.54 78.00,172.60"/>
<polyline points="93.90,132.40 94.86,132.64 95.75,133.05 96.52,133.62 97.10,134.31 97.47,135.09 97.60,135.91 97.47,136.74 97.10,137.52 96.52,138.21 95.75,138.77 94.86,139.19 93.90,139.43 92.94,139.49 92.05,139.38 91.28,139.12 90.70,138.74 90.33,138.26 90.20,137.74 90.33,137.22 90.70,136.75 91.28,136.36 92.05,136.10 92.94,135.99 93.90,136.05 94.86,136.30 95.75,136.71 96.52,137.27 97.10,137.96 97.47,138.74 97.60,139.57 97.47,140.39 97.10,141.17 96.52,141.86 95.75,142.43 94.86,142.84 93.90,143.08 92.94,143.15 92.05,143.04 91.28,142.78 90.70,142.39 90.33,141.92 90.20,141.40 90.33,140.87 90.70,140.40 91.28,140.01 92.05,139.75 92.94,139.65 93.90,139.71 94.86,139.95 95.75,140.36 96.52,140.93 97.10,141.62 97.47,142.40 97.60,143.22 97.47,144.05 97.10,144.83 96.52,145.52 95.75,146.08 94.86,146.50 93.90,146.74 92.94,146.80 92.05,146.69 91.28,146.43 90.70,146.05 90.33,145.57 90.20,145.05 90.33,144.53 90.70,144.05 91.28,143.67 92.05,143.41 92.94,143.30 93.90,143.36 94.86,143.60 95.75,144.02 96.52,144.58 97.10,145.27 97.47,146.05 97.60,146.88 97.47,147.70 97.10,148.48 96.52,149.17 95.75,149.74 94.86,150.15 93.90,150.39 92.94,150.45 92.05,150.35 91.28,150.09 90.70,149.70 90.33,149.23 90.20,148.70 90.33,148.18 90.70,147.71 91.28,147.32 92.05,147.06 92.94,146.95 93.90,147.02 94.86,147.26 95.75,147.67 96.52,148.24 97.10,148.93 97.47,149.71 97.60,150.53 97.47,151.36 97.10,152.14 96.52,152.83 95.75,153.39 94.86,153.80 93.90,154.05 92.94,154.11 92.05,154.00 91.28,153.74 90.70,153.35 90.33,152.88 90.20,152.36 90.33,151.84 90.70,151.36 91.28,150.98 92.05,150.72 92.94,150.61 93.90,150.67 94.86,150.91 95.75,151.33 96.52,151.89 97.10,152.58 97.47,153.36 97.60,154.19 97.47,155.01 97.10,155.79 96.52,156.48 95.75,157.05 94.86,157.46 93.90,157.70 92.94,157.76 92.05,157.66 91.28,157.40 90.70,157.01 90.33,156.53 90.20,156.01 90.33,155.49 90.70,155.02 91.28,154.63 92.05,154.37 92.94,154.26 93.90,154.33 94.86,154.57 95.75,154.98 96.52,155.55 97.10,156.24 97.47,157.02 97.60,157.84 97.47,158.67 97.10,159.45 96.52,160.14 95.75,160.70 94.86,161.11 93.90,161.35 92.94,161.42 92.05,161.31 91.28,161.05 90.70,160.66 90.33,160.19 90.20,159.67 90.33,159.15 90.70,158.67 91.28,158.29 92.05,158.03 92.94,157.92 93.90,157.98 94.86,158.22 95.75,158.63 96.52,159.20 97.10,159.89 97.47,160.67 97.60,161.50 97.47,162.32 97.10,163.10 96.52,163.79 95.75,164.36 94.86,164.77 93.90,165.01 92.94,165.07 92.05,164.97 91.28,164.70 90.70,164.32 90.33,163.84 90.20,163.32 90.33,162.80 90.70,162.33 91.28,161.94 92.05,161.68 92.94,161.57 93.90,161.64 94.86,161.88 95.75,162.29 96.52,162.85 97.10,163.55 97.47,164.32 97.60,165.15 97.47,165.98 97.10,166.75 96.52,167.45 95.75,168.01 94.86,168.42 93.90,168.66 92.94,168.73 92.05,168.62 91.28,168.36 90.70,167.97 90.33,167.50 90.20,166.98 90.33,166.46 90.70,165.98 91.28,165.60 92.05,165.33 92.94,165.23 93.90,165.29 94.86,165.53 95.75,165.94 96.52,166.51 97.10,167.20 97.47,167.98 97.60,168.80 97.47,169.63 97.10,170.41 96.52,171.10 95.75,171.67 94.86,172.08 93.90,172.32 92.94,172.38 92.05,172.27 91.28,172.01 90.70,171.63 90.33,171.15 90.20,170.63 90.33,170.11 90.70,169.64 91.28,169.25 92.05,168.99 92.94,168.88 93.90,168.95 94.86,169.19 95.75,169.60 96.52,170.16 97.10,170.85 97.47,171.63 97.60,172.46 97.47,173.28 97.10,174.06 96.52,174.75 95.75,175.32 94.86,175.73 93.90,175.97 92.94,176.04 92.05,175.93 91.28,175.67 90.70,175.28 90.33,174.81 90.20,174.29 90.33,173.77 90.70,173.29 91.28,172.90 92.05,172.64 92.94,172.54 93.90,172.60"/>
</g>
</svg>
<div class="t" style="left:104px;top:74px;color:#000;letter-spacing:-0.3px;font-size:11px">BR1 1N4007</div>
<div class="t" style="left:68px;top:91px;color:#000;letter-spacing:-0.3px;font-size:11px">T1 363V</div>
<div class="t" style="left:68px;top:103px;color:#000;letter-spacing:-0.3px;font-size:11px">(110Ω)</div>
<div class="t" style="right:1213px;top:138px;color:#000;letter-spacing:-0.3px;font-size:11px">C1 47uF</div>
<div class="t" style="right:1213px;top:150px;color:#000;letter-spacing:-0.3px;font-size:11px">(2Ω)</div>
<div class="t" style="right:1131px;top:138px;color:#000;letter-spacing:-0.3px;font-size:11px">I1</div>
<div class="t" style="right:1131px;top:150px;color:#000;letter-spacing:-0.3px;font-size:11px">300mA</div>
<div class="t" style="left:362px;top:80px;color:#000;letter-spacing:-0.3px;font-size:11px">R1 1kΩ</div>
<div class="t" style="right:1041px;top:138px;color:#000;letter-spacing:-0.3px;font-size:11px">C2 47uF</div>
<div class="t" style="right:1040px;top:150px;color:#000;letter-spacing:-0.3px;font-size:11px">(2Ω)</div>
<div class="t" style="right:951px;top:138px;color:#000;letter-spacing:-0.3px;font-size:11px">I2</div>
<div class="t" style="right:951px;top:150px;color:#000;letter-spacing:-0.3px;font-size:11px">15mA</div>
<div class="t" style="left:537px;top:80px;color:#00004a;letter-spacing:-0.3px;font-size:11px">R2 18kΩ</div>
<div class="t" style="right:863px;top:138px;color:#00004a;letter-spacing:-0.3px;font-size:11px">C3 47uF</div>
<div class="t" style="right:863px;top:150px;color:#00004a;letter-spacing:-0.3px;font-size:11px">(2Ω)</div>
<div class="t" style="left:633px;top:138px;color:#000;letter-spacing:-0.3px;font-size:11px">I3</div>
<div class="t" style="left:633px;top:150px;color:#000;letter-spacing:-0.3px;font-size:11px">5mA</div>
<div class="t" style="left:56px;width:120px;text-align:center;top:208.5px;font-size:9px;letter-spacing:0.35px;color:#000">Bridge (SS)</div>
<div class="t" style="left:150.5px;width:120px;text-align:center;top:208.5px;font-size:9px;letter-spacing:0.35px;color:#000">C Filter</div>
<div class="t" style="left:238px;width:120px;text-align:center;top:208.5px;font-size:9px;letter-spacing:0.35px;color:#000">Current Tap</div>
<div class="t" style="left:328px;width:120px;text-align:center;top:208.5px;font-size:9px;letter-spacing:0.35px;color:#000">RC Filter Section</div>
<div class="t" style="left:416px;width:120px;text-align:center;top:208.5px;font-size:9px;letter-spacing:0.35px;color:#000">Current Tap</div>
<div class="t" style="left:506px;width:120px;text-align:center;top:208.5px;font-size:9px;letter-spacing:0.35px;color:#00004a">RC Filter Section</div>
<div class="t" style="left:585.5px;width:120px;text-align:center;top:208.5px;font-size:9px;letter-spacing:0.35px;color:#000">Load</div>

<div class="a" style="left:73px;top:245px;width:81px;height:25px;background:#d4d0c8;border-top:1px solid #fff;border-left:1px solid #fff;border-right:1px solid #404040;border-bottom:1px solid #404040;box-shadow:inset -1px -1px 0 #808080"></div>
<div class="t" style="left:73px;top:252px;width:81px;text-align:center">Simulate</div>
<div class="t" style="left:162px;top:252px">For</div>
<div class="a" style="left:185px;top:247px;width:41px;height:21px;background:#fff;border-top:1px solid #808080;border-left:1px solid #808080;border-right:1px solid #fff;border-bottom:1px solid #fff;box-shadow:inset 1px 1px 0 #404040,inset -1px -1px 0 #d4d0c8"></div>
<div class="t" style="left:188px;top:251px">9,000</div>
<div class="a" style="left:228px;top:247px;width:13px;height:11px;background:#d4d0c8;border-top:1px solid #fff;border-left:1px solid #fff;border-right:1px solid #404040;border-bottom:1px solid #404040;box-shadow:inset -1px -1px 0 #808080"></div>
<div class="a" style="left:228px;top:258px;width:13px;height:10px;background:#d4d0c8;border-top:1px solid #fff;border-left:1px solid #fff;border-right:1px solid #404040;border-bottom:1px solid #404040;box-shadow:inset -1px -1px 0 #808080"></div>
<svg class="a" style="left:228px;top:247px" width="13" height="21"><path d="M4.5 6.5h4L6.5 4.5z" fill="#000"/><path d="M4.5 15h4l-2 2z" fill="#000"/></svg>
<div class="t" style="left:246px;top:252px">ms</div>
<div class="t" style="left:266px;top:252px">after a reporting delay of</div>
<div class="a" style="left:385px;top:247px;width:41px;height:21px;background:#fff;border-top:1px solid #808080;border-left:1px solid #808080;border-right:1px solid #fff;border-bottom:1px solid #fff;box-shadow:inset 1px 1px 0 #404040,inset -1px -1px 0 #d4d0c8"></div>
<div class="t" style="left:388px;top:251px">2</div>
<div class="a" style="left:428px;top:247px;width:13px;height:11px;background:#d4d0c8;border-top:1px solid #fff;border-left:1px solid #fff;border-right:1px solid #404040;border-bottom:1px solid #404040;box-shadow:inset -1px -1px 0 #808080"></div>
<div class="a" style="left:428px;top:258px;width:13px;height:10px;background:#d4d0c8;border-top:1px solid #fff;border-left:1px solid #fff;border-right:1px solid #404040;border-bottom:1px solid #404040;box-shadow:inset -1px -1px 0 #808080"></div>
<svg class="a" style="left:428px;top:247px" width="13" height="21"><path d="M4.5 6.5h4L6.5 4.5z" fill="#000"/><path d="M4.5 15h4l-2 2z" fill="#000"/></svg>
<div class="t" style="left:446px;top:252px">S</div>
<div class="a" style="left:66px;top:278px;width:331px;height:1px;background:#808080"></div>
<div class="a" style="left:66px;top:279px;width:331px;height:602px;border-top:1px solid #808080;border-left:1px solid #808080;border-right:1px solid #fff;border-bottom:1px solid #fff"></div>
<div class="a" style="left:67px;top:280px;width:329px;height:600px;background:#fff;border-top:1px solid #404040;border-left:1px solid #404040;border-right:1px solid #d4d0c8;border-bottom:1px solid #d4d0c8"></div>
<div class="a" style="left:68px;top:281px;width:46px;height:17px;background:#d4d0c8;border-top:1px solid #fff;border-left:1px solid #fff;border-right:1px solid #404040;border-bottom:1px solid #404040;box-shadow:inset -1px -1px 0 #808080"></div>
<div class="t" style="left:76px;top:284px">Result</div>
<div class="a" style="left:114px;top:281px;width:56px;height:17px;background:#d4d0c8;border-top:1px solid #fff;border-left:1px solid #fff;border-right:1px solid #404040;border-bottom:1px solid #404040;box-shadow:inset -1px -1px 0 #808080"></div>
<div class="t" style="right:1277px;top:284px">Min</div>
<div class="a" style="left:170px;top:281px;width:53px;height:17px;background:#d4d0c8;border-top:1px solid #fff;border-left:1px solid #fff;border-right:1px solid #404040;border-bottom:1px solid #404040;box-shadow:inset -1px -1px 0 #808080"></div>
<div class="t" style="right:1224px;top:284px">Max</div>
<div class="a" style="left:223px;top:281px;width:53px;height:17px;background:#d4d0c8;border-top:1px solid #fff;border-left:1px solid #fff;border-right:1px solid #404040;border-bottom:1px solid #404040;box-shadow:inset -1px -1px 0 #808080"></div>
<div class="t" style="right:1171px;top:284px">Diff</div>
<div class="a" style="left:276px;top:281px;width:54px;height:17px;background:#d4d0c8;border-top:1px solid #fff;border-left:1px solid #fff;border-right:1px solid #404040;border-bottom:1px solid #404040;box-shadow:inset -1px -1px 0 #808080"></div>
<div class="t" style="right:1117px;top:284px">Mean</div>
<div class="a" style="left:330px;top:281px;width:53px;height:17px;background:#d4d0c8;border-top:1px solid #fff;border-left:1px solid #fff;border-right:1px solid #404040;border-bottom:1px solid #404040;box-shadow:inset -1px -1px 0 #808080"></div>
<div class="t" style="right:1064px;top:284px">RMS</div>
<div class="a" style="left:383px;top:281px;width:13px;height:17px;background:#d4d0c8;border-top:1px solid #fff;border-left:1px solid #fff;border-bottom:1px solid #404040;box-shadow:inset 0 -1px 0 #808080"></div>
<div class="a" style="left:72px;top:300px;width:12px;height:12px;border:1px solid #000;background:#fff"></div>
<div class="t" style="left:91px;top:301px;color:#000">I(B...</div>
<div class="t" style="right:1275px;top:301px;color:#000">-194,07u</div>
<div class="t" style="right:1222px;top:301px;color:#000">1,0823</div>
<div class="t" style="right:1169px;top:301px;color:#000">1,0825</div>
<div class="t" style="right:1115px;top:301px;color:#000">160,07m</div>
<div class="t" style="right:1062px;top:301px;color:#000">370,92m</div>
<div class="a" style="left:72px;top:317px;width:12px;height:12px;border:1px solid #000;background:#fff"></div>
<div class="t" style="left:91px;top:318px;color:#000">I(C1)</div>
<div class="t" style="right:1275px;top:318px;color:#000">-339,75m</div>
<div class="t" style="right:1222px;top:318px;color:#000">759,44m</div>
<div class="t" style="right:1169px;top:318px;color:#000">1,0992</div>
<div class="t" style="right:1115px;top:318px;color:#000">3,0085u</div>
<div class="t" style="right:1062px;top:318px;color:#000">414,39m</div>
<div class="a" style="left:72px;top:334px;width:12px;height:12px;border:1px solid #000;background:#fff"></div>
<div class="t" style="left:91px;top:335px;color:#000">I(C2)</div>
<div class="t" style="right:1275px;top:335px;color:#000">-19,846m</div>
<div class="t" style="right:1222px;top:335px;color:#000">20,259m</div>
<div class="t" style="right:1169px;top:335px;color:#000">40,106m</div>
<div class="t" style="right:1115px;top:335px;color:#000">9,4034u</div>
<div class="t" style="right:1062px;top:335px;color:#000">12,860m</div>
<div class="a" style="left:72px;top:351px;width:12px;height:12px;border:1px solid #000;background:#fff"></div>
<div class="t" style="left:91px;top:352px;color:#000">I(C3)</div>
<div class="t" style="right:1275px;top:352px;color:#000">-37,274u</div>
<div class="t" style="right:1222px;top:352px;color:#000">1,7848m</div>
<div class="t" style="right:1169px;top:352px;color:#000">1,8221m</div>
<div class="t" style="right:1115px;top:352px;color:#000">134,87u</div>
<div class="t" style="right:1062px;top:352px;color:#000">336,88u</div>
<div class="a" style="left:72px;top:368px;width:12px;height:12px;border:1px solid #000;background:#fff"></div>
<div class="t" style="left:91px;top:369px;color:#000">I(I1)</div>
<div class="t" style="right:1275px;top:369px;color:#000">299,79m</div>
<div class="t" style="right:1222px;top:369px;color:#000">300,13m</div>
<div class="t" style="right:1169px;top:369px;color:#000">334,84u</div>
<div class="t" style="right:1115px;top:369px;color:#000">300,00m</div>
<div class="t" style="right:1062px;top:369px;color:#000">300,00m</div>
<div class="a" style="left:72px;top:385px;width:12px;height:12px;border:1px solid #000;background:#fff"></div>
<div class="t" style="left:91px;top:386px;color:#000">I(I2)</div>
<div class="t" style="right:1275px;top:386px;color:#000">14,999m</div>
<div class="t" style="right:1222px;top:386px;color:#000">15,000m</div>
<div class="t" style="right:1169px;top:386px;color:#000">618,45n</div>
<div class="t" style="right:1115px;top:386px;color:#000">15,000m</div>
<div class="t" style="right:1062px;top:386px;color:#000">15,000m</div>
<div class="a" style="left:72px;top:402px;width:12px;height:12px;border:1px solid #000;background:#fff"></div>
<div class="t" style="left:91px;top:403px;color:#000">I(I3)</div>
<div class="t" style="right:1275px;top:403px;color:#000">5m</div>
<div class="t" style="right:1222px;top:403px;color:#000">5m</div>
<div class="t" style="right:1169px;top:403px;color:#000">0</div>
<div class="t" style="right:1115px;top:403px;color:#000">5,0000m</div>
<div class="t" style="right:1062px;top:403px;color:#000">4,9999m</div>
<div class="a" style="left:72px;top:419px;width:12px;height:12px;border:1px solid #000;background:#fff"></div>
<div class="t" style="left:91px;top:420px;color:#000">I(R1)</div>
<div class="t" style="right:1275px;top:420px;color:#000">141,06u</div>
<div class="t" style="right:1222px;top:420px;color:#000">41,996m</div>
<div class="t" style="right:1169px;top:420px;color:#000">41,855m</div>
<div class="t" style="right:1115px;top:420px;color:#000">20,144m</div>
<div class="t" style="right:1062px;top:420px;color:#000">23,902m</div>
<div class="a" style="left:86px;top:434px;width:297px;height:17px;background:#0a246a"></div>
<div class="a" style="left:72px;top:436px;width:12px;height:12px;border:1px solid #000;background:#fff"></div>
<div class="t" style="left:91px;top:437px;color:#fff">I(R2)</div>
<div class="t" style="right:1275px;top:437px;color:#fff">4,9627m</div>
<div class="t" style="right:1222px;top:437px;color:#fff">6,7847m</div>
<div class="t" style="right:1169px;top:437px;color:#fff">1,8220m</div>
<div class="t" style="right:1115px;top:437px;color:#fff">5,1348m</div>
<div class="t" style="right:1062px;top:437px;color:#fff">5,1441m</div>
<div class="a" style="left:72px;top:453px;width:12px;height:12px;border:1px solid #000;background:#fff"></div>
<div class="t" style="left:91px;top:454px;color:#000">I(T1)</div>
<div class="t" style="right:1275px;top:454px;color:#000">-1,0822</div>
<div class="t" style="right:1222px;top:454px;color:#000">1,0823</div>
<div class="t" style="right:1169px;top:454px;color:#000">2,1646</div>
<div class="t" style="right:1115px;top:454px;color:#000">827,93n</div>
<div class="t" style="right:1062px;top:454px;color:#000">524,56m</div>
<div class="a" style="left:72px;top:470px;width:12px;height:12px;border:1px solid #000;background:#fff"></div>
<div class="t" style="left:91px;top:471px;color:#000">V(...</div>
<div class="t" style="right:1275px;top:471px;color:#000">-409,15</div>
<div class="t" style="right:1222px;top:471px;color:#000">943,24m</div>
<div class="t" style="right:1169px;top:471px;color:#000">410,09</div>
<div class="t" style="right:1115px;top:471px;color:#000">-244,51</div>
<div class="t" style="right:1062px;top:471px;color:#000">297,81</div>
<div class="a" style="left:72px;top:487px;width:12px;height:12px;border:1px solid #000;background:#fff"></div>
<div class="t" style="left:91px;top:488px;color:#000">V(...</div>
<div class="t" style="right:1275px;top:488px;color:#000">369,58</div>
<div class="t" style="right:1222px;top:488px;color:#000">410,18</div>
<div class="t" style="right:1169px;top:488px;color:#000">40,603</div>
<div class="t" style="right:1115px;top:488px;color:#000">390,21</div>
<div class="t" style="right:1062px;top:488px;color:#000">390,43</div>
<div class="a" style="left:72px;top:504px;width:12px;height:12px;border:1px solid #000;background:#fff"></div>
<div class="t" style="left:91px;top:505px;color:#000">V(...</div>
<div class="t" style="right:1275px;top:505px;color:#000">367,18</div>
<div class="t" style="right:1222px;top:505px;color:#000">370,74</div>
<div class="t" style="right:1169px;top:505px;color:#000">3,5631</div>
<div class="t" style="right:1115px;top:505px;color:#000">370,03</div>
<div class="t" style="right:1062px;top:505px;color:#000">370,03</div>
<div class="a" style="left:72px;top:521px;width:12px;height:12px;border:1px solid #000;background:#fff"></div>
<div class="t" style="left:91px;top:522px;color:#000">V(...</div>
<div class="t" style="right:1275px;top:522px;color:#000">246,21</div>
<div class="t" style="right:1222px;top:522px;color:#000">280,20</div>
<div class="t" style="right:1169px;top:522px;color:#000">33,984</div>
<div class="t" style="right:1115px;top:522px;color:#000">277,59</div>
<div class="t" style="right:1062px;top:522px;color:#000">277,65</div>
<div class="a" style="left:72px;top:538px;width:12px;height:12px;border:1px solid #000;background:#fff"></div>
<svg class="a" style="left:72px;top:538px" width="12" height="12"><path d="M2.8 5.3L4.8 7.8L9.2 3.2" stroke="#000" stroke-width="2.2" fill="none"/></svg>
<div class="t" style="left:91px;top:539px;color:#000">V(I1)</div>
<div class="t" style="right:1275px;top:539px;color:#000">369,53</div>
<div class="t" style="right:1222px;top:539px;color:#000">410,14</div>
<div class="t" style="right:1169px;top:539px;color:#000">40,609</div>
<div class="t" style="right:1115px;top:539px;color:#000">390,17</div>
<div class="t" style="right:1062px;top:539px;color:#000">390,38</div>
<div class="a" style="left:72px;top:555px;width:12px;height:12px;border:1px solid #000;background:#fff"></div>
<svg class="a" style="left:72px;top:555px" width="12" height="12"><path d="M2.8 5.3L4.8 7.8L9.2 3.2" stroke="#000" stroke-width="2.2" fill="none"/></svg>
<div class="t" style="left:91px;top:556px;color:#000">V(I2)</div>
<div class="t" style="right:1275px;top:556px;color:#000">367,17</div>
<div class="t" style="right:1222px;top:556px;color:#000">370,73</div>
<div class="t" style="right:1169px;top:556px;color:#000">3,5631</div>
<div class="t" style="right:1115px;top:556px;color:#000">370,02</div>
<div class="t" style="right:1062px;top:556px;color:#000">370,02</div>
<div class="a" style="left:72px;top:572px;width:12px;height:12px;border:1px solid #000;background:#fff"></div>
<svg class="a" style="left:72px;top:572px" width="12" height="12"><path d="M2.8 5.3L4.8 7.8L9.2 3.2" stroke="#000" stroke-width="2.2" fill="none"/></svg>
<div class="t" style="left:91px;top:573px;color:#000">V(I3)</div>
<div class="t" style="right:1275px;top:573px;color:#000">246,21</div>
<div class="t" style="right:1222px;top:573px;color:#000">280,20</div>
<div class="t" style="right:1169px;top:573px;color:#000">33,984</div>
<div class="t" style="right:1115px;top:573px;color:#000">277,59</div>
<div class="t" style="right:1062px;top:573px;color:#000">277,65</div>
<div class="a" style="left:72px;top:589px;width:12px;height:12px;border:1px solid #000;background:#fff"></div>
<div class="t" style="left:91px;top:590px;color:#000">V(...</div>
<div class="t" style="right:1275px;top:590px;color:#000">141,06m</div>
<div class="t" style="right:1222px;top:590px;color:#000">41,996</div>
<div class="t" style="right:1169px;top:590px;color:#000">41,855</div>
<div class="t" style="right:1115px;top:590px;color:#000">20,144</div>
<div class="t" style="right:1062px;top:590px;color:#000">23,902</div>
<div class="a" style="left:72px;top:606px;width:12px;height:12px;border:1px solid #000;background:#fff"></div>
<div class="t" style="left:91px;top:607px;color:#000">V(...</div>
<div class="t" style="right:1275px;top:607px;color:#000">89,329</div>
<div class="t" style="right:1222px;top:607px;color:#000">122,12</div>
<div class="t" style="right:1169px;top:607px;color:#000">32,796</div>
<div class="t" style="right:1115px;top:607px;color:#000">92,427</div>
<div class="t" style="right:1062px;top:607px;color:#000">92,594</div>
<div class="a" style="left:86px;top:621px;width:297px;height:17px;border:1px dotted #000"></div>
<div class="a" style="left:72px;top:623px;width:12px;height:12px;border:1px solid #000;background:#fff"></div>
<div class="t" style="left:91px;top:624px;color:#000">V(...</div>
<div class="t" style="right:1275px;top:624px;color:#000">-410,89</div>
<div class="t" style="right:1222px;top:624px;color:#000">410,89</div>
<div class="t" style="right:1169px;top:624px;color:#000">821,79</div>
<div class="t" style="right:1115px;top:624px;color:#000">-93,088u</div>
<div class="t" style="right:1062px;top:624px;color:#000">317,41</div>
<div class="a" style="left:397px;top:279px;width:3px;height:601px;background:#d4d0c8"></div>
<div class="a" style="left:397px;top:278px;width:1042px;height:1px;background:#808080"></div>
<div class="a" style="left:400px;top:279px;width:1039px;height:601px;background:#c0c0c0"></div>
<div class="a" style="left:1439px;top:279px;width:1px;height:601px;background:#fff"></div>
<svg class="a" style="left:400px;top:279px" width="1039" height="601" viewBox="400 279 1039 601">
<path d="M478 831.5H1335M478 815.5H1335M478 798.5H1335M478 781.5H1335M478 765.5H1335M478 748.5H1335M478 731.5H1335M478 715.5H1335M478 698.5H1335M478 681.5H1335M478 665.5H1335M478 648.5H1335M478 631.5H1335M478 615.5H1335M478 598.5H1335M478 581.5H1335M478 565.5H1335M478 548.5H1335M478 531.5H1335M478 514.5H1335M478 498.5H1335M478 481.5H1335M478 464.5H1335M478 448.5H1335M478 431.5H1335M478 414.5H1335M478 398.5H1335M478 381.5H1335M478 364.5H1335M478 348.5H1335M478 331.5H1335M478 314.5H1335M566.5 297V843M662.5 297V843M759.5 297V843M855.5 297V843M951.5 297V843M1047.5 297V843M1144.5 297V843M1240.5 297V843" stroke="#6a6a6a" stroke-width="1" stroke-dasharray="4 4" fill="none" shape-rendering="crispEdges"/>
<polygon points="471,298 1336,298 1336,429 1336,429 653,429 653,430 591,430 591,431 556,431 556,432 531,432 531,433 510,433 510,433 495,433 495,433 481,433 481,433 471,433" fill="#ff0000" shape-rendering="crispEdges"/>
<polygon points="471,436 481,436 481,435 495,435 495,434 510,434 510,433 531,433 531,432 556,432 556,431 591,431 591,430 653,430 653,429 1336,429 1336,434 653,434 653,435 591,435 591,436 556,436 556,437 531,437 531,438 510,438 510,439 495,439 495,440 481,440 481,441 471,441" fill="#008000" shape-rendering="crispEdges"/>
<path d="M471 841h1v2h-1zM472 840h1v2h-1zM473 839h1v2h-1zM474 837h1v3h-1zM475 836h1v2h-1zM476 835h1v2h-1zM477 834h1v2h-1zM478 833h1v2h-1zM479 831h1v3h-1zM480 830h1v2h-1zM481 829h1v2h-1zM482 828h1v2h-1zM483 827h1v2h-1zM484 826h1v2h-1zM485 825h1v2h-1zM486 824h1v2h-1zM487 823h1v2h-1zM488 822h1v2h-1zM489 821h1v2h-1zM490 820h1v2h-1zM491 819h1v2h-1zM492 818h1v2h-1zM493 817h1v2h-1zM494 816h1v2h-1zM495 815h1v2h-1zM496 814h1v2h-1zM497 813h1v2h-1zM498 812h1v2h-1zM499 811h1v2h-1zM500 810h1v2h-1zM501 809h1v2h-1zM502 808h1v2h-1zM503 807h1v2h-1zM504 807h1v1h-1zM505 806h1v2h-1zM506 805h1v2h-1zM507 804h1v2h-1zM508 803h1v2h-1zM509 802h1v2h-1zM510 802h1v1h-1zM511 801h1v2h-1zM512 800h1v2h-1zM513 799h1v2h-1zM514 798h1v2h-1zM515 798h1v1h-1zM516 797h1v2h-1zM517 796h1v2h-1zM518 795h1v2h-1zM519 795h1v1h-1zM520 794h1v2h-1zM521 793h1v2h-1zM522 792h1v2h-1zM523 792h1v1h-1zM524 791h1v2h-1zM525 790h1v2h-1zM526 790h1v1h-1zM527 789h1v2h-1zM528 788h1v2h-1zM529 788h1v1h-1zM530 787h1v2h-1zM531 786h1v2h-1zM532 786h1v1h-1zM533 785h1v2h-1zM534 785h1v1h-1zM535 784h1v2h-1zM536 783h1v2h-1zM537 783h1v1h-1zM538 782h1v2h-1zM539 782h1v1h-1zM540 781h1v2h-1zM541 780h1v2h-1zM542 780h1v1h-1zM543 779h1v2h-1zM544 779h1v1h-1zM545 778h1v2h-1zM546 778h1v1h-1zM547 777h1v2h-1zM548 777h1v1h-1zM549 776h1v2h-1zM550 776h1v1h-1zM551 775h1v2h-1zM552 775h1v1h-1zM553 774h1v2h-1zM554 774h1v1h-1zM555 773h1v2h-1zM556 773h1v1h-1zM557 772h1v2h-1zM558 772h1v1h-1zM559 771h1v2h-1zM560 771h1v1h-1zM561 770h1v2h-1zM562 770h1v1h-1zM563 769h1v2h-1zM564 769h1v1h-1zM565 768h1v2h-1zM566 768h1v1h-1zM567 768h1v1h-1zM568 767h1v2h-1zM569 767h1v1h-1zM570 766h1v2h-1zM571 766h1v1h-1zM572 766h1v1h-1zM573 765h1v2h-1zM574 765h1v1h-1zM575 764h1v2h-1zM576 764h1v1h-1zM577 764h1v1h-1zM578 763h1v2h-1zM579 763h1v1h-1zM580 763h1v1h-1zM581 762h1v2h-1zM582 762h1v1h-1zM583 761h1v2h-1zM584 761h1v1h-1zM585 761h1v1h-1zM586 760h1v2h-1zM587 760h1v1h-1zM588 760h1v1h-1zM589 759h1v2h-1zM590 759h1v1h-1zM591 759h1v1h-1zM592 758h1v2h-1zM593 758h1v1h-1zM594 758h1v1h-1zM595 757h1v2h-1zM596 757h1v1h-1zM597 757h1v1h-1zM598 757h1v1h-1zM599 756h1v2h-1zM600 756h1v1h-1zM601 756h1v1h-1zM602 755h1v2h-1zM603 755h1v1h-1zM604 755h1v1h-1zM605 755h1v1h-1zM606 754h1v2h-1zM607 754h1v1h-1zM608 754h1v1h-1zM609 753h1v2h-1zM610 753h1v1h-1zM611 753h1v1h-1zM612 753h1v1h-1zM613 752h1v2h-1zM614 752h1v1h-1zM615 752h1v1h-1zM616 752h1v1h-1zM617 751h1v2h-1zM618 751h1v1h-1zM619 751h1v1h-1zM620 751h1v1h-1zM621 751h1v1h-1zM622 750h1v2h-1zM623 750h1v1h-1zM624 750h1v1h-1zM625 750h1v1h-1zM626 749h1v2h-1zM627 749h1v1h-1zM628 749h1v1h-1zM629 749h1v1h-1zM630 749h1v1h-1zM631 748h1v2h-1zM632 748h1v1h-1zM633 748h1v1h-1zM634 748h1v1h-1zM635 748h1v1h-1zM636 747h1v2h-1zM637 747h1v1h-1zM638 747h1v1h-1zM639 747h1v1h-1zM640 747h1v1h-1zM641 746h1v2h-1zM642 746h1v1h-1zM643 746h1v1h-1zM644 746h1v1h-1zM645 746h1v1h-1zM646 746h1v1h-1zM647 745h1v2h-1zM648 745h1v1h-1zM649 745h1v1h-1zM650 745h1v1h-1zM651 745h1v1h-1zM652 745h1v1h-1zM653 744h1v2h-1zM654 744h1v1h-1zM655 744h1v1h-1zM656 744h1v1h-1zM657 744h1v1h-1zM658 744h1v1h-1zM659 743h1v2h-1zM660 743h1v1h-1zM661 743h1v1h-1zM662 743h1v1h-1zM663 743h1v1h-1zM664 743h1v1h-1zM665 743h1v1h-1zM666 742h1v2h-1zM667 742h1v1h-1zM668 742h1v1h-1zM669 742h1v1h-1zM670 742h1v1h-1zM671 742h1v1h-1zM672 742h1v1h-1zM673 741h1v2h-1zM674 741h1v1h-1zM675 741h1v1h-1zM676 741h1v1h-1zM677 741h1v1h-1zM678 741h1v1h-1zM679 741h1v1h-1zM680 741h1v1h-1zM681 740h1v2h-1zM682 740h1v1h-1zM683 740h1v1h-1zM684 740h1v1h-1zM685 740h1v1h-1zM686 740h1v1h-1zM687 740h1v1h-1zM688 740h1v1h-1zM689 740h1v1h-1zM690 739h1v2h-1zM691 739h1v1h-1zM692 739h1v1h-1zM693 739h1v1h-1zM694 739h1v1h-1zM695 739h1v1h-1zM696 739h1v1h-1zM697 739h1v1h-1zM698 739h1v1h-1zM699 739h1v1h-1zM700 738h1v2h-1zM701 738h1v1h-1zM702 738h1v1h-1zM703 738h1v1h-1zM704 738h1v1h-1zM705 738h1v1h-1zM706 738h1v1h-1zM707 738h1v1h-1zM708 738h1v1h-1zM709 738h1v1h-1zM710 738h1v1h-1zM711 738h1v1h-1zM712 737h1v2h-1zM713 737h1v1h-1zM714 737h1v1h-1zM715 737h1v1h-1zM716 737h1v1h-1zM717 737h1v1h-1zM718 737h1v1h-1zM719 737h1v1h-1zM720 737h1v1h-1zM721 737h1v1h-1zM722 737h1v1h-1zM723 737h1v1h-1zM724 737h1v1h-1zM725 736h1v2h-1zM726 736h1v1h-1zM727 736h1v1h-1zM728 736h1v1h-1zM729 736h1v1h-1zM730 736h1v1h-1zM731 736h1v1h-1zM732 736h1v1h-1zM733 736h1v1h-1zM734 736h1v1h-1zM735 736h1v1h-1zM736 736h1v1h-1zM737 736h1v1h-1zM738 736h1v1h-1zM739 736h1v1h-1zM740 735h1v2h-1zM741 735h1v1h-1zM742 735h1v1h-1zM743 735h1v1h-1zM744 735h1v1h-1zM745 735h1v1h-1zM746 735h1v1h-1zM747 735h1v1h-1zM748 735h1v1h-1zM749 735h1v1h-1zM750 735h1v1h-1zM751 735h1v1h-1zM752 735h1v1h-1zM753 735h1v1h-1zM754 735h1v1h-1zM755 735h1v1h-1zM756 735h1v1h-1zM757 735h1v1h-1zM758 734h1v2h-1zM759 734h1v1h-1zM760 734h1v1h-1zM761 734h1v1h-1zM762 734h1v1h-1zM763 734h1v1h-1zM764 734h1v1h-1zM765 734h1v1h-1zM766 734h1v1h-1zM767 734h1v1h-1zM768 734h1v1h-1zM769 734h1v1h-1zM770 734h1v1h-1zM771 734h1v1h-1zM772 734h1v1h-1zM773 734h1v1h-1zM774 734h1v1h-1zM775 734h1v1h-1zM776 734h1v1h-1zM777 734h1v1h-1zM778 734h1v1h-1zM779 734h1v1h-1zM780 734h1v1h-1zM781 733h1v2h-1zM782 733h1v1h-1zM783 733h1v1h-1zM784 733h1v1h-1zM785 733h1v1h-1zM786 733h1v1h-1zM787 733h1v1h-1zM788 733h1v1h-1zM789 733h1v1h-1zM790 733h1v1h-1zM791 733h1v1h-1zM792 733h1v1h-1zM793 733h1v1h-1zM794 733h1v1h-1zM795 733h1v1h-1zM796 733h1v1h-1zM797 733h1v1h-1zM798 733h1v1h-1zM799 733h1v1h-1zM800 733h1v1h-1zM801 733h1v1h-1zM802 733h1v1h-1zM803 733h1v1h-1zM804 733h1v1h-1zM805 733h1v1h-1zM806 733h1v1h-1zM807 733h1v1h-1zM808 733h1v1h-1zM809 733h1v1h-1zM810 733h1v1h-1zM811 733h1v1h-1zM812 733h1v1h-1zM813 732h1v2h-1zM814 732h1v1h-1zM815 732h1v1h-1zM816 732h1v1h-1zM817 732h1v1h-1zM818 732h1v1h-1zM819 732h1v1h-1zM820 732h1v1h-1zM821 732h1v1h-1zM822 732h1v1h-1zM823 732h1v1h-1zM824 732h1v1h-1zM825 732h1v1h-1zM826 732h1v1h-1zM827 732h1v1h-1zM828 732h1v1h-1zM829 732h1v1h-1zM830 732h1v1h-1zM831 732h1v1h-1zM832 732h1v1h-1zM833 732h1v1h-1zM834 732h1v1h-1zM835 732h1v1h-1zM836 732h1v1h-1zM837 732h1v1h-1zM838 732h1v1h-1zM839 732h1v1h-1zM840 732h1v1h-1zM841 732h1v1h-1zM842 732h1v1h-1zM843 732h1v1h-1zM844 732h1v1h-1zM845 732h1v1h-1zM846 732h1v1h-1zM847 732h1v1h-1zM848 732h1v1h-1zM849 732h1v1h-1zM850 732h1v1h-1zM851 732h1v1h-1zM852 732h1v1h-1zM853 732h1v1h-1zM854 732h1v1h-1zM855 732h1v1h-1zM856 732h1v1h-1zM857 732h1v1h-1zM858 732h1v1h-1zM859 732h1v1h-1zM860 732h1v1h-1zM861 732h1v1h-1zM862 731h1v2h-1zM863 731h1v1h-1zM864 731h1v1h-1zM865 731h1v1h-1zM866 731h1v1h-1zM867 731h1v1h-1zM868 731h1v1h-1zM869 731h1v1h-1zM870 731h1v1h-1zM871 731h1v1h-1zM872 731h1v1h-1zM873 731h1v1h-1zM874 731h1v1h-1zM875 731h1v1h-1zM876 731h1v1h-1zM877 731h1v1h-1zM878 731h1v1h-1zM879 731h1v1h-1zM880 731h1v1h-1zM881 731h1v1h-1zM882 731h1v1h-1zM883 731h1v1h-1zM884 731h1v1h-1zM885 731h1v1h-1zM886 731h1v1h-1zM887 731h1v1h-1zM888 731h1v1h-1zM889 731h1v1h-1zM890 731h1v1h-1zM891 731h1v1h-1zM892 731h1v1h-1zM893 731h1v1h-1zM894 731h1v1h-1zM895 731h1v1h-1zM896 731h1v1h-1zM897 731h1v1h-1zM898 731h1v1h-1zM899 731h1v1h-1zM900 731h1v1h-1zM901 731h1v1h-1zM902 731h1v1h-1zM903 731h1v1h-1zM904 731h1v1h-1zM905 731h1v1h-1zM906 731h1v1h-1zM907 731h1v1h-1zM908 731h1v1h-1zM909 731h1v1h-1zM910 731h1v1h-1zM911 731h1v1h-1zM912 731h1v1h-1zM913 731h1v1h-1zM914 731h1v1h-1zM915 731h1v1h-1zM916 731h1v1h-1zM917 731h1v1h-1zM918 731h1v1h-1zM919 731h1v1h-1zM920 731h1v1h-1zM921 731h1v1h-1zM922 731h1v1h-1zM923 731h1v1h-1zM924 731h1v1h-1zM925 731h1v1h-1zM926 731h1v1h-1zM927 731h1v1h-1zM928 731h1v1h-1zM929 731h1v1h-1zM930 731h1v1h-1zM931 731h1v1h-1zM932 731h1v1h-1zM933 731h1v1h-1zM934 731h1v1h-1zM935 731h1v1h-1zM936 731h1v1h-1zM937 731h1v1h-1zM938 731h1v1h-1zM939 731h1v1h-1zM940 731h1v1h-1zM941 731h1v1h-1zM942 731h1v1h-1zM943 731h1v1h-1zM944 731h1v1h-1zM945 731h1v1h-1zM946 731h1v1h-1zM947 731h1v1h-1zM948 731h1v1h-1zM949 731h1v1h-1zM950 731h1v1h-1zM951 731h1v1h-1zM952 731h1v1h-1zM953 731h1v1h-1zM954 731h1v1h-1zM955 731h1v1h-1zM956 731h1v1h-1zM957 731h1v1h-1zM958 731h1v1h-1zM959 731h1v1h-1zM960 731h1v1h-1zM961 731h1v1h-1zM962 731h1v1h-1zM963 731h1v1h-1zM964 731h1v1h-1zM965 731h1v1h-1zM966 731h1v1h-1zM967 731h1v1h-1zM968 731h1v1h-1zM969 731h1v1h-1zM970 731h1v1h-1zM971 731h1v1h-1zM972 731h1v1h-1zM973 731h1v1h-1zM974 731h1v1h-1zM975 731h1v1h-1zM976 731h1v1h-1zM977 731h1v1h-1zM978 731h1v1h-1zM979 731h1v1h-1zM980 731h1v1h-1zM981 731h1v1h-1zM982 730h1v2h-1zM983 730h1v1h-1zM984 730h1v1h-1zM985 730h1v1h-1zM986 730h1v1h-1zM987 730h1v1h-1zM988 730h1v1h-1zM989 730h1v1h-1zM990 730h1v1h-1zM991 730h1v1h-1zM992 730h1v1h-1zM993 730h1v1h-1zM994 730h1v1h-1zM995 730h1v1h-1zM996 730h1v1h-1zM997 730h1v1h-1zM998 730h1v1h-1zM999 730h1v1h-1zM1000 730h1v1h-1zM1001 730h1v1h-1zM1002 730h1v1h-1zM1003 730h1v1h-1zM1004 730h1v1h-1zM1005 730h1v1h-1zM1006 730h1v1h-1zM1007 730h1v1h-1zM1008 730h1v1h-1zM1009 730h1v1h-1zM1010 730h1v1h-1zM1011 730h1v1h-1zM1012 730h1v1h-1zM1013 730h1v1h-1zM1014 730h1v1h-1zM1015 730h1v1h-1zM1016 730h1v1h-1zM1017 730h1v1h-1zM1018 730h1v1h-1zM1019 730h1v1h-1zM1020 730h1v1h-1zM1021 730h1v1h-1zM1022 730h1v1h-1zM1023 730h1v1h-1zM1024 730h1v1h-1zM1025 730h1v1h-1zM1026 730h1v1h-1zM1027 730h1v1h-1zM1028 730h1v1h-1zM1029 730h1v1h-1zM1030 730h1v1h-1zM1031 730h1v1h-1zM1032 730h1v1h-1zM1033 730h1v1h-1zM1034 730h1v1h-1zM1035 730h1v1h-1zM1036 730h1v1h-1zM1037 730h1v1h-1zM1038 730h1v1h-1zM1039 730h1v1h-1zM1040 730h1v1h-1zM1041 730h1v1h-1zM1042 730h1v1h-1zM1043 730h1v1h-1zM1044 730h1v1h-1zM1045 730h1v1h-1zM1046 730h1v1h-1zM1047 730h1v1h-1zM1048 730h1v1h-1zM1049 730h1v1h-1zM1050 730h1v1h-1zM1051 730h1v1h-1zM1052 730h1v1h-1zM1053 730h1v1h-1zM1054 730h1v1h-1zM1055 730h1v1h-1zM1056 730h1v1h-1zM1057 730h1v1h-1zM1058 730h1v1h-1zM1059 730h1v1h-1zM1060 730h1v1h-1zM1061 730h1v1h-1zM1062 730h1v1h-1zM1063 730h1v1h-1zM1064 730h1v1h-1zM1065 730h1v1h-1zM1066 730h1v1h-1zM1067 730h1v1h-1zM1068 730h1v1h-1zM1069 730h1v1h-1zM1070 730h1v1h-1zM1071 730h1v1h-1zM1072 730h1v1h-1zM1073 730h1v1h-1zM1074 730h1v1h-1zM1075 730h1v1h-1zM1076 730h1v1h-1zM1077 730h1v1h-1zM1078 730h1v1h-1zM1079 730h1v1h-1zM1080 730h1v1h-1zM1081 730h1v1h-1zM1082 730h1v1h-1zM1083 730h1v1h-1zM1084 730h1v1h-1zM1085 730h1v1h-1zM1086 730h1v1h-1zM1087 730h1v1h-1zM1088 730h1v1h-1zM1089 730h1v1h-1zM1090 730h1v1h-1zM1091 730h1v1h-1zM1092 730h1v1h-1zM1093 730h1v1h-1zM1094 730h1v1h-1zM1095 730h1v1h-1zM1096 730h1v1h-1zM1097 730h1v1h-1zM1098 730h1v1h-1zM1099 730h1v1h-1zM1100 730h1v1h-1zM1101 730h1v1h-1zM1102 730h1v1h-1zM1103 730h1v1h-1zM1104 730h1v1h-1zM1105 730h1v1h-1zM1106 730h1v1h-1zM1107 730h1v1h-1zM1108 730h1v1h-1zM1109 730h1v1h-1zM1110 730h1v1h-1zM1111 730h1v1h-1zM1112 730h1v1h-1zM1113 730h1v1h-1zM1114 730h1v1h-1zM1115 730h1v1h-1zM1116 730h1v1h-1zM1117 730h1v1h-1zM1118 730h1v1h-1zM1119 730h1v1h-1zM1120 730h1v1h-1zM1121 730h1v1h-1zM1122 730h1v1h-1zM1123 730h1v1h-1zM1124 730h1v1h-1zM1125 730h1v1h-1zM1126 730h1v1h-1zM1127 730h1v1h-1zM1128 730h1v1h-1zM1129 730h1v1h-1zM1130 730h1v1h-1zM1131 730h1v1h-1zM1132 730h1v1h-1zM1133 730h1v1h-1zM1134 730h1v1h-1zM1135 730h1v1h-1zM1136 730h1v1h-1zM1137 730h1v1h-1zM1138 730h1v1h-1zM1139 730h1v1h-1zM1140 730h1v1h-1zM1141 730h1v1h-1zM1142 730h1v1h-1zM1143 730h1v1h-1zM1144 730h1v1h-1zM1145 730h1v1h-1zM1146 730h1v1h-1zM1147 730h1v1h-1zM1148 730h1v1h-1zM1149 730h1v1h-1zM1150 730h1v1h-1zM1151 730h1v1h-1zM1152 730h1v1h-1zM1153 730h1v1h-1zM1154 730h1v1h-1zM1155 730h1v1h-1zM1156 730h1v1h-1zM1157 730h1v1h-1zM1158 730h1v1h-1zM1159 730h1v1h-1zM1160 730h1v1h-1zM1161 730h1v1h-1zM1162 730h1v1h-1zM1163 730h1v1h-1zM1164 730h1v1h-1zM1165 730h1v1h-1zM1166 730h1v1h-1zM1167 730h1v1h-1zM1168 730h1v1h-1zM1169 730h1v1h-1zM1170 730h1v1h-1zM1171 730h1v1h-1zM1172 730h1v1h-1zM1173 730h1v1h-1zM1174 730h1v1h-1zM1175 730h1v1h-1zM1176 730h1v1h-1zM1177 730h1v1h-1zM1178 730h1v1h-1zM1179 730h1v1h-1zM1180 730h1v1h-1zM1181 730h1v1h-1zM1182 730h1v1h-1zM1183 730h1v1h-1zM1184 730h1v1h-1zM1185 730h1v1h-1zM1186 730h1v1h-1zM1187 730h1v1h-1zM1188 730h1v1h-1zM1189 730h1v1h-1zM1190 730h1v1h-1zM1191 730h1v1h-1zM1192 730h1v1h-1zM1193 730h1v1h-1zM1194 730h1v1h-1zM1195 730h1v1h-1zM1196 730h1v1h-1zM1197 730h1v1h-1zM1198 730h1v1h-1zM1199 730h1v1h-1zM1200 730h1v1h-1zM1201 730h1v1h-1zM1202 730h1v1h-1zM1203 730h1v1h-1zM1204 730h1v1h-1zM1205 730h1v1h-1zM1206 730h1v1h-1zM1207 730h1v1h-1zM1208 730h1v1h-1zM1209 730h1v1h-1zM1210 730h1v1h-1zM1211 730h1v1h-1zM1212 730h1v1h-1zM1213 730h1v1h-1zM1214 730h1v1h-1zM1215 730h1v1h-1zM1216 730h1v1h-1zM1217 730h1v1h-1zM1218 730h1v1h-1zM1219 730h1v1h-1zM1220 730h1v1h-1zM1221 730h1v1h-1zM1222 730h1v1h-1zM1223 730h1v1h-1zM1224 730h1v1h-1zM1225 730h1v1h-1zM1226 730h1v1h-1zM1227 730h1v1h-1zM1228 730h1v1h-1zM1229 730h1v1h-1zM1230 730h1v1h-1zM1231 730h1v1h-1zM1232 730h1v1h-1zM1233 730h1v1h-1zM1234 730h1v1h-1zM1235 730h1v1h-1zM1236 730h1v1h-1zM1237 730h1v1h-1zM1238 730h1v1h-1zM1239 730h1v1h-1zM1240 730h1v1h-1zM1241 730h1v1h-1zM1242 730h1v1h-1zM1243 730h1v1h-1zM1244 730h1v1h-1zM1245 730h1v1h-1zM1246 730h1v1h-1zM1247 730h1v1h-1zM1248 730h1v1h-1zM1249 730h1v1h-1zM1250 730h1v1h-1zM1251 730h1v1h-1zM1252 730h1v1h-1zM1253 730h1v1h-1zM1254 730h1v1h-1zM1255 730h1v1h-1zM1256 730h1v1h-1zM1257 730h1v1h-1zM1258 730h1v1h-1zM1259 730h1v1h-1zM1260 730h1v1h-1zM1261 730h1v1h-1zM1262 730h1v1h-1zM1263 730h1v1h-1zM1264 730h1v1h-1zM1265 730h1v1h-1zM1266 730h1v1h-1zM1267 730h1v1h-1zM1268 730h1v1h-1zM1269 730h1v1h-1zM1270 730h1v1h-1zM1271 730h1v1h-1zM1272 730h1v1h-1zM1273 730h1v1h-1zM1274 730h1v1h-1zM1275 730h1v1h-1zM1276 730h1v1h-1zM1277 730h1v1h-1zM1278 730h1v1h-1zM1279 730h1v1h-1zM1280 730h1v1h-1zM1281 730h1v1h-1zM1282 730h1v1h-1zM1283 730h1v1h-1zM1284 730h1v1h-1zM1285 730h1v1h-1zM1286 730h1v1h-1zM1287 730h1v1h-1zM1288 730h1v1h-1zM1289 730h1v1h-1zM1290 730h1v1h-1zM1291 730h1v1h-1zM1292 730h1v1h-1zM1293 730h1v1h-1zM1294 730h1v1h-1zM1295 730h1v1h-1zM1296 730h1v1h-1zM1297 730h1v1h-1zM1298 730h1v1h-1zM1299 730h1v1h-1zM1300 730h1v1h-1zM1301 730h1v1h-1zM1302 730h1v1h-1zM1303 730h1v1h-1zM1304 730h1v1h-1zM1305 730h1v1h-1zM1306 730h1v1h-1zM1307 730h1v1h-1zM1308 730h1v1h-1zM1309 730h1v1h-1zM1310 730h1v1h-1zM1311 730h1v1h-1zM1312 730h1v1h-1zM1313 730h1v1h-1zM1314 730h1v1h-1zM1315 730h1v1h-1zM1316 730h1v1h-1zM1317 730h1v1h-1zM1318 730h1v1h-1zM1319 730h1v1h-1zM1320 730h1v1h-1zM1321 730h1v1h-1zM1322 730h1v1h-1zM1323 730h1v1h-1zM1324 730h1v1h-1zM1325 730h1v1h-1zM1326 730h1v1h-1zM1327 730h1v1h-1zM1328 730h1v1h-1zM1329 730h1v1h-1zM1330 730h1v1h-1zM1331 730h1v1h-1zM1332 730h1v1h-1zM1333 730h1v1h-1zM1334 730h1v1h-1zM1335 730h1v1h-1z" fill="#ffff00" shape-rendering="crispEdges"/>
<path d="M469 297h2v548h-2z M469 843h868v2h-868z M1336 297h1v548h-1z" fill="#000" shape-rendering="crispEdges"/>
<path d="M469 297h868v1h-868z" fill="#a0a4a4" shape-rendering="crispEdges"/><path d="M469 297.5H1337" stroke="#000" stroke-dasharray="4 4" shape-rendering="crispEdges"/>
<path d="M466 831.5H474M466 815.5H474M466 798.5H474M466 781.5H474M466 765.5H474M466 748.5H474M466 731.5H474M466 715.5H474M466 698.5H474M466 681.5H474M466 665.5H474M466 648.5H474M466 631.5H474M466 615.5H474M466 598.5H474M466 581.5H474M466 565.5H474M466 548.5H474M466 531.5H474M466 514.5H474M466 498.5H474M466 481.5H474M466 464.5H474M466 448.5H474M466 431.5H474M466 414.5H474M466 398.5H474M466 381.5H474M466 364.5H474M466 348.5H474M466 331.5H474M466 314.5H474M466 298.5H474M468 844.5H469M468 840.5H469M468 836.5H469M468 831.5H469M468 827.5H469M468 823.5H469M468 819.5H469M468 815.5H469M468 811.5H469M468 806.5H469M468 802.5H469M468 798.5H469M468 794.5H469M468 790.5H469M468 786.5H469M468 781.5H469M468 777.5H469M468 773.5H469M468 769.5H469M468 765.5H469M468 761.5H469M468 756.5H469M468 752.5H469M468 748.5H469M468 744.5H469M468 740.5H469M468 735.5H469M468 731.5H469M468 727.5H469M468 723.5H469M468 719.5H469M468 715.5H469M468 710.5H469M468 706.5H469M468 702.5H469M468 698.5H469M468 694.5H469M468 690.5H469M468 685.5H469M468 681.5H469M468 677.5H469M468 673.5H469M468 669.5H469M468 665.5H469M468 660.5H469M468 656.5H469M468 652.5H469M468 648.5H469M468 644.5H469M468 640.5H469M468 635.5H469M468 631.5H469M468 627.5H469M468 623.5H469M468 619.5H469M468 615.5H469M468 610.5H469M468 606.5H469M468 602.5H469M468 598.5H469M468 594.5H469M468 590.5H469M468 585.5H469M468 581.5H469M468 577.5H469M468 573.5H469M468 569.5H469M468 565.5H469M468 560.5H469M468 556.5H469M468 552.5H469M468 548.5H469M468 544.5H469M468 540.5H469M468 535.5H469M468 531.5H469M468 527.5H469M468 523.5H469M468 519.5H469M468 514.5H469M468 510.5H469M468 506.5H469M468 502.5H469M468 498.5H469M468 494.5H469M468 489.5H469M468 485.5H469M468 481.5H469M468 477.5H469M468 473.5H469M468 469.5H469M468 464.5H469M468 460.5H469M468 456.5H469M468 452.5H469M468 448.5H469M468 444.5H469M468 439.5H469M468 435.5H469M468 431.5H469M468 427.5H469M468 423.5H469M468 419.5H469M468 414.5H469M468 410.5H469M468 406.5H469M468 402.5H469M468 398.5H469M468 394.5H469M468 389.5H469M468 385.5H469M468 381.5H469M468 377.5H469M468 373.5H469M468 369.5H469M468 364.5H469M468 360.5H469M468 356.5H469M468 352.5H469M468 348.5H469M468 344.5H469M468 339.5H469M468 335.5H469M468 331.5H469M468 327.5H469M468 323.5H469M468 318.5H469M468 314.5H469M468 310.5H469M468 306.5H469M470.5 845V848M494.5 845V848M518.5 845V848M542.5 845V848M566.5 845V849M590.5 845V848M614.5 845V848M638.5 845V848M662.5 845V849M686.5 845V848M711.5 845V848M735.5 845V848M759.5 845V849M783.5 845V848M807.5 845V848M831.5 845V848M855.5 845V849M879.5 845V848M903.5 845V848M927.5 845V848M951.5 845V849M975.5 845V848M999.5 845V848M1023.5 845V848M1047.5 845V849M1071.5 845V848M1095.5 845V848M1119.5 845V848M1144.5 845V849M1168.5 845V848M1192.5 845V848M1216.5 845V848M1240.5 845V849M1264.5 845V848M1288.5 845V848M1312.5 845V848" stroke="#505050" stroke-width="1" fill="none" shape-rendering="crispEdges"/>
</svg>
<div class="t" style="right:976px;top:825.9px">250</div>
<div class="t" style="right:976px;top:809.2px">255</div>
<div class="t" style="right:976px;top:792.5px">260</div>
<div class="t" style="right:976px;top:775.9px">265</div>
<div class="t" style="right:976px;top:759.2px">270</div>
<div class="t" style="right:976px;top:742.5px">275</div>
<div class="t" style="right:976px;top:725.8px">280</div>
<div class="t" style="right:976px;top:709.1px">285</div>
<div class="t" style="right:976px;top:692.5px">290</div>
<div class="t" style="right:976px;top:675.8px">295</div>
<div class="t" style="right:976px;top:659.1px">300</div>
<div class="t" style="right:976px;top:642.4px">305</div>
<div class="t" style="right:976px;top:625.7px">310</div>
<div class="t" style="right:976px;top:609.1px">315</div>
<div class="t" style="right:976px;top:592.4px">320</div>
<div class="t" style="right:976px;top:575.7px">325</div>
<div class="t" style="right:976px;top:559.0px">330</div>
<div class="t" style="right:976px;top:542.3px">335</div>
<div class="t" style="right:976px;top:525.7px">340</div>
<div class="t" style="right:976px;top:509.0px">345</div>
<div class="t" style="right:976px;top:492.3px">350</div>
<div class="t" style="right:976px;top:475.6px">355</div>
<div class="t" style="right:976px;top:458.9px">360</div>
<div class="t" style="right:976px;top:442.3px">365</div>
<div class="t" style="right:976px;top:425.6px">370</div>
<div class="t" style="right:976px;top:408.9px">375</div>
<div class="t" style="right:976px;top:392.2px">380</div>
<div class="t" style="right:976px;top:375.5px">385</div>
<div class="t" style="right:976px;top:358.9px">390</div>
<div class="t" style="right:976px;top:342.2px">395</div>
<div class="t" style="right:976px;top:325.5px">400</div>
<div class="t" style="right:976px;top:308.8px">405</div>
<div class="t" style="right:976px;top:292.1px">410</div>
<div class="t" style="left:546.2px;width:40px;text-align:center;top:850px">3</div>
<div class="t" style="left:642.4px;width:40px;text-align:center;top:850px">4</div>
<div class="t" style="left:738.7px;width:40px;text-align:center;top:850px">5</div>
<div class="t" style="left:834.9px;width:40px;text-align:center;top:850px">6</div>
<div class="t" style="left:931.1px;width:40px;text-align:center;top:850px">7</div>
<div class="t" style="left:1027.3px;width:40px;text-align:center;top:850px">8</div>
<div class="t" style="left:1123.5px;width:40px;text-align:center;top:850px">9</div>
<div class="t" style="left:1219.8px;width:40px;text-align:center;top:850px">10</div>
<div class="t" style="left:431px;top:561px;transform:rotate(-90deg);transform-origin:6px 6px">V</div>
<div class="a" style="left:1368px;top:342px;width:40px;height:40px;background:#000"></div>
<div class="a" style="left:1364px;top:338px;width:40px;height:40px;background:#fff;border:1px solid #000"></div>
<div class="a" style="left:1369px;top:346px;width:4px;height:1px;background:#ff0000"></div>
<div class="t" style="left:1377px;top:341px">V(I1)</div>
<div class="a" style="left:1369px;top:358px;width:4px;height:1px;background:#008000"></div>
<div class="t" style="left:1377px;top:353px">V(I2)</div>
<div class="a" style="left:1369px;top:370px;width:4px;height:1px;background:#ffff00"></div>
<div class="t" style="left:1377px;top:365px">V(I3)</div>
<div class="a" style="left:1361px;top:280px;width:26px;height:25px;background:#d4d0c8;border-top:1px solid #fff;border-left:1px solid #fff;border-right:1px solid #404040;border-bottom:1px solid #404040;box-shadow:inset -1px -1px 0 #808080"></div>
<svg class="a" style="left:1361px;top:280px" width="26" height="25"><path d="M15 14.5L20.5 20" stroke="#0000ff" stroke-width="2"/><path d="M8 5h5l3 3v5l-3 3h-5l-3-3v-5z" fill="#80ffff" stroke="#000" stroke-width="1"/><path d="M6.5 17h8l-4 4z" fill="#000"/></svg>
<div class="a" style="left:1387px;top:280px;width:26px;height:25px;background:#d4d0c8;border-top:1px solid #fff;border-left:1px solid #fff;border-right:1px solid #404040;border-bottom:1px solid #404040;box-shadow:inset -1px -1px 0 #808080"></div>
<svg class="a" style="left:1387px;top:280px" width="26" height="25"><path d="M15 14.5L20.5 20" stroke="#0000ff" stroke-width="2"/><path d="M8 5h5l3 3v5l-3 3h-5l-3-3v-5z" fill="#80ffff" stroke="#000" stroke-width="1"/><path d="M6.5 21h8l-4-4z" fill="#000"/></svg>
<div class="a" style="left:1413px;top:280px;width:26px;height:25px;background:#d4d0c8;border-top:1px solid #fff;border-left:1px solid #fff;border-right:1px solid #404040;border-bottom:1px solid #404040;box-shadow:inset -1px -1px 0 #808080"></div>
<svg class="a" style="left:1413px;top:280px" width="26" height="25"><path d="M15 14.5L20.5 20" stroke="#0000ff" stroke-width="2"/><path d="M8 5h5l3 3v5l-3 3h-5l-3-3v-5z" fill="#80ffff" stroke="#000" stroke-width="1"/><path d="M9.5 9.5l7 7M16.5 9.5l-7 7" stroke="#ff0000" stroke-width="2.4"/></svg>
</body></html>
